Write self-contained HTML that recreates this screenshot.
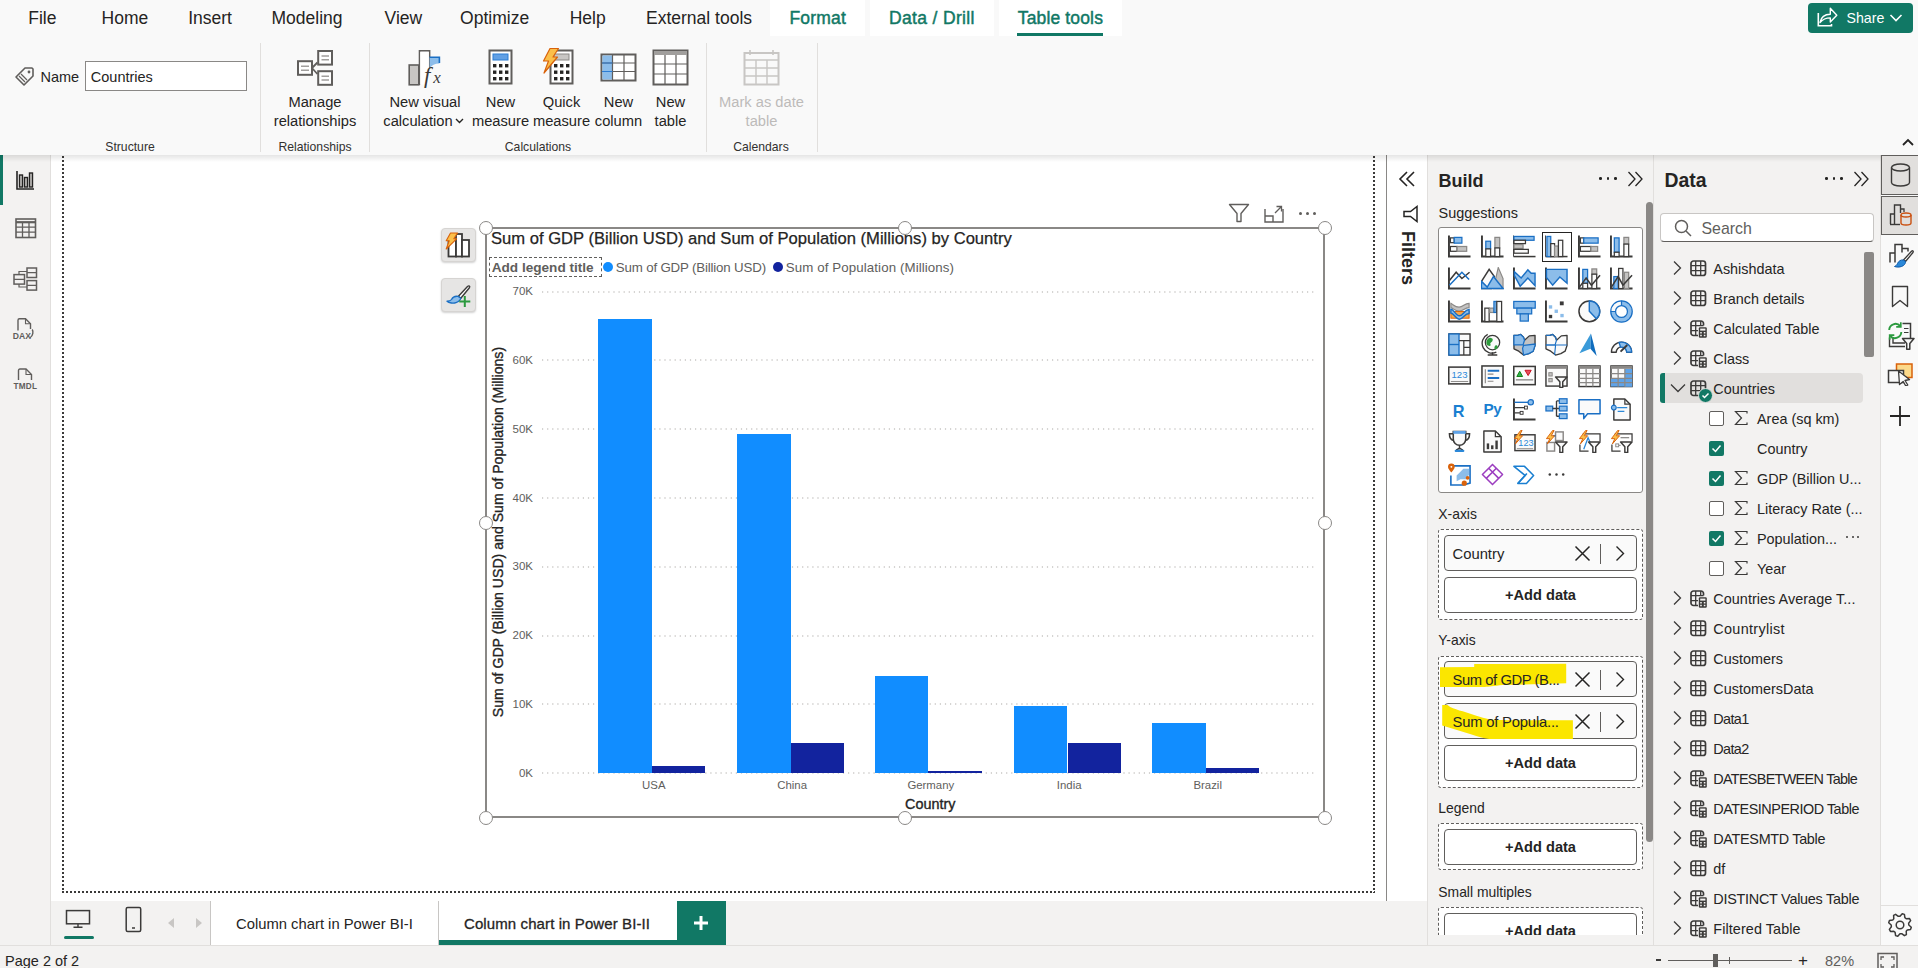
<!DOCTYPE html><html><head><meta charset="utf-8"><style>
html,body{margin:0;padding:0;width:1918px;height:968px;overflow:hidden;background:#fff;font-family:"Liberation Sans",sans-serif;}
.r{position:absolute;}
.t{position:absolute;white-space:nowrap;}
</style></head><body>
<div class="r" style="left:0px;top:0px;width:1918px;height:155px;background:#f9f9f9;"></div>
<div class="r" style="left:770px;top:0px;width:95px;height:36px;background:#ffffff;"></div>
<div class="r" style="left:870px;top:0px;width:124px;height:36px;background:#ffffff;"></div>
<div class="r" style="left:999px;top:0px;width:123px;height:36px;background:#ffffff;"></div>
<div class="r" style="left:0px;top:155px;width:50px;height:790px;background:#f3f2f1;"></div>
<div class="r" style="left:50px;top:155px;width:1px;height:790px;background:#e1dfdd;"></div>
<div class="r" style="left:0px;top:155px;width:3px;height:50px;background:#117865;"></div>
<div class="r" style="left:51px;top:156px;width:1335px;height:745px;background:#ffffff;"></div>
<svg class="r" style="left:62px;top:156px;" width="2" height="737" viewBox="0 0 2 737" fill="none"><line x1="1" y1="0" x2="1" y2="737" stroke="#3b3a39" stroke-width="2" stroke-dasharray="2 2"/></svg>
<svg class="r" style="left:1373px;top:156px;" width="2" height="737" viewBox="0 0 2 737" fill="none"><line x1="1" y1="0" x2="1" y2="737" stroke="#3b3a39" stroke-width="2" stroke-dasharray="2 2"/></svg>
<svg class="r" style="left:62px;top:891px;" width="1313" height="2" viewBox="0 0 1313 2" fill="none"><line x1="0" y1="1" x2="1313" y2="1" stroke="#3b3a39" stroke-width="2" stroke-dasharray="2 2"/></svg>
<div class="r" style="left:1386px;top:155px;width:1px;height:746px;background:#8a8886;"></div>
<div class="r" style="left:1387px;top:155px;width:41px;height:746px;background:#ffffff;"></div>
<div class="r" style="left:51px;top:901px;width:1376px;height:44px;background:#f3f2f1;"></div>
<div class="r" style="left:1427px;top:155px;width:1px;height:790px;background:#e1dfdd;"></div>
<div class="r" style="left:1428px;top:155px;width:225px;height:790px;background:#f3f2f1;"></div>
<div class="r" style="left:1653px;top:155px;width:1px;height:790px;background:#e1dfdd;"></div>
<div class="r" style="left:1654px;top:155px;width:226px;height:790px;background:#f3f2f1;"></div>
<div class="r" style="left:1880px;top:155px;width:1px;height:790px;background:#e1dfdd;"></div>
<div class="r" style="left:1881px;top:155px;width:37px;height:790px;background:#f9f9f9;"></div>
<div class="r" style="left:0px;top:945px;width:1918px;height:23px;background:#f3f2f1;"></div>
<div class="r" style="left:0px;top:945px;width:1918px;height:1px;background:#e1dfdd;"></div>
<div class="r" style="left:0px;top:155px;width:1918px;height:7px;background:linear-gradient(rgba(0,0,0,0.10),rgba(0,0,0,0.0));"></div>
<div class="t" style="left:28.3px;top:9.7px;font-size:17.5px;line-height:17.5px;color:#252423;">File</div>
<div class="t" style="left:101.6px;top:9.7px;font-size:17.5px;line-height:17.5px;color:#252423;">Home</div>
<div class="t" style="left:188.2px;top:9.7px;font-size:17.5px;line-height:17.5px;color:#252423;">Insert</div>
<div class="t" style="left:271.5px;top:9.7px;font-size:17.5px;line-height:17.5px;color:#252423;">Modeling</div>
<div class="t" style="left:384.6px;top:9.7px;font-size:17.5px;line-height:17.5px;color:#252423;">View</div>
<div class="t" style="left:460.1px;top:9.7px;font-size:17.5px;line-height:17.5px;color:#252423;">Optimize</div>
<div class="t" style="left:569.7px;top:9.7px;font-size:17.5px;line-height:17.5px;color:#252423;">Help</div>
<div class="t" style="left:646.0px;top:9.7px;font-size:17.5px;line-height:17.5px;color:#252423;">External tools</div>
<div class="t" style="left:789.5px;top:9.7px;font-size:17.5px;line-height:17.5px;color:#117865;letter-spacing:0.175px;-webkit-text-stroke:0.45px #117865;">Format</div>
<div class="t" style="left:888.9px;top:9.7px;font-size:17.5px;line-height:17.5px;color:#117865;letter-spacing:0.356px;-webkit-text-stroke:0.45px #117865;">Data / Drill</div>
<div class="t" style="left:1017.8px;top:9.7px;font-size:17.5px;line-height:17.5px;color:#117865;letter-spacing:0.143px;-webkit-text-stroke:0.45px #117865;">Table tools</div>
<div class="r" style="left:1017px;top:33px;width:86px;height:3px;background:#117865;"></div>
<div class="r" style="left:1808px;top:3px;width:105px;height:30px;background:#117865;border-radius:4px;"></div>
<div class="t" style="left:1846.5px;top:11.0px;font-size:14.2px;line-height:14.2px;color:#ffffff;">Share</div>
<svg class="r" style="left:1816px;top:5px;" width="23" height="23" viewBox="0 0 23 23" fill="none"><path d="M2.3 8V20.8H15.5V19" stroke="#fff" stroke-width="1.6"/><path d="M4 17.5C5.2 11.5 9 9.3 14.3 9.3V3.2L20.8 10.2L14.3 17V12.9C9.8 12.9 6.8 14.3 4 17.5Z" stroke="#fff" stroke-width="1.4" stroke-linejoin="round"/></svg>
<svg class="r" style="left:1889px;top:13px;" width="14" height="10" viewBox="0 0 14 10" fill="none"><path d="M1.5 2l5.5 5.5 5.5-5.5" stroke="#fff" stroke-width="1.6"/></svg>
<svg class="r" style="left:1902px;top:138px;" width="12" height="8" viewBox="0 0 12 8" fill="none"><path d="M1 7l5-5 5 5" stroke="#252423" stroke-width="1.8"/></svg>
<div class="r" style="left:260px;top:43px;width:1px;height:109px;background:#e1dfdd;"></div>
<div class="r" style="left:369px;top:43px;width:1px;height:109px;background:#e1dfdd;"></div>
<div class="r" style="left:706px;top:43px;width:1px;height:109px;background:#e1dfdd;"></div>
<div class="r" style="left:817px;top:43px;width:1px;height:109px;background:#e1dfdd;"></div>
<svg class="r" style="left:14px;top:65px;" width="22" height="22" viewBox="0 0 22 22" fill="none"><path d="M2 12L11 3h7l1 1v7l-9 9z" stroke="#605e5c" stroke-width="1.6" stroke-linejoin="round"/><path d="M5 11l6 6M7 9l6 6" stroke="#605e5c" stroke-width="1.2"/><circle cx="15" cy="7" r="1.4" fill="#605e5c"/></svg>
<div class="t" style="left:40.5px;top:69.7px;font-size:14.5px;line-height:14.5px;color:#252423;">Name</div>
<div class="r" style="left:85px;top:61px;width:162px;height:30px;background:#fff;border:1px solid #8a8886;box-sizing:border-box;"></div>
<div class="t" style="left:90.8px;top:70.2px;font-size:14.5px;line-height:14.5px;color:#252423;">Countries</div>
<div class="t" style="left:130.0px;top:141.1px;font-size:12.2px;line-height:12.2px;color:#323130;transform:translateX(-50%);">Structure</div>
<svg class="r" style="left:296px;top:49px;" width="38" height="38" viewBox="0 0 38 38" fill="none"><rect x="2" y="12.2" width="14" height="13.6" fill="#fff" stroke="#605e5c" stroke-width="2"/><rect x="22.2" y="2" width="13.8" height="13.6" fill="#fff" stroke="#605e5c" stroke-width="2"/><rect x="22.2" y="22.2" width="13.8" height="13.6" fill="#fff" stroke="#605e5c" stroke-width="2"/><path d="M16 19L21.4 13.5M16 19L21.4 25" stroke="#605e5c" stroke-width="1.8"/><path d="M5 17.3h8M5 21.3h8M25.5 7h7.5M25.5 10.8h7.5M25.5 27.2h7.5M25.5 31h7.5" stroke="#a19f9d" stroke-width="1.4"/></svg>
<div class="t" style="left:315.0px;top:94.6px;font-size:14.7px;line-height:14.7px;color:#252423;transform:translateX(-50%);">Manage</div>
<div class="t" style="left:315.0px;top:114.1px;font-size:14.7px;line-height:14.7px;color:#252423;transform:translateX(-50%);">relationships</div>
<div class="t" style="left:315.0px;top:141.1px;font-size:12.2px;line-height:12.2px;color:#323130;transform:translateX(-50%);">Relationships</div>
<svg class="r" style="left:407px;top:49px;" width="38" height="40" viewBox="0 0 38 40" fill="none"><rect x="2.2" y="16" width="9.6" height="19.8" fill="#c8c6c4" stroke="#605e5c" stroke-width="1.6"/><path d="M12.5 36V1.9H22.6V19.5" fill="#fff" stroke="#605e5c" stroke-width="1.6"/><rect x="13.3" y="2.7" width="8.5" height="33" fill="#fff"/><path d="M22.6 8.3H32.4V14.5C28 14.5 24.5 16 22.6 19.5Z" fill="#8cbdea"/><path d="M22.6 8.3H32.4V14" stroke="#1a6fc4" stroke-width="1.6"/><text x="17" y="34.2" font-family="Liberation Serif" font-style="italic" font-size="23" fill="#3b3a39">f</text><text x="26.2" y="33.5" font-family="Liberation Serif" font-style="italic" font-size="17" fill="#3b3a39">x</text></svg>
<div class="t" style="left:425.0px;top:94.6px;font-size:14.7px;line-height:14.7px;color:#252423;transform:translateX(-50%);">New visual</div>
<div class="t" style="left:418.0px;top:114.1px;font-size:14.7px;line-height:14.7px;color:#252423;transform:translateX(-50%);">calculation</div>
<svg class="r" style="left:455px;top:118px;" width="9" height="6" viewBox="0 0 9 6" fill="none"><path d="M1 1l3.5 3.5L8 1" stroke="#252423" stroke-width="1.4"/></svg>
<svg class="r" style="left:488px;top:49px;" width="26" height="37" viewBox="0 0 26 37" fill="none"><rect x="1.5" y="1.5" width="22" height="33" fill="#fff" stroke="#605e5c" stroke-width="2"/><rect x="5" y="5" width="15" height="6" fill="#62a0e4" stroke="#2b7cd3" stroke-width="1"/><rect x="5" y="15.0" width="3.4" height="3.4" fill="#252423"/><rect x="11" y="15.0" width="3.4" height="3.4" fill="#252423"/><rect x="17" y="15.0" width="3.4" height="3.4" fill="#252423"/><rect x="5" y="21.5" width="3.4" height="3.4" fill="#252423"/><rect x="11" y="21.5" width="3.4" height="3.4" fill="#252423"/><rect x="17" y="21.5" width="3.4" height="3.4" fill="#252423"/><rect x="5" y="28.0" width="3.4" height="3.4" fill="#252423"/><rect x="11" y="28.0" width="3.4" height="3.4" fill="#252423"/><rect x="17" y="28.0" width="3.4" height="3.4" fill="#252423"/></svg>
<div class="t" style="left:500.5px;top:94.6px;font-size:14.7px;line-height:14.7px;color:#252423;transform:translateX(-50%);">New</div>
<div class="t" style="left:500.5px;top:114.1px;font-size:14.7px;line-height:14.7px;color:#252423;transform:translateX(-50%);">measure</div>
<svg class="r" style="left:546px;top:49px;" width="28" height="37" viewBox="0 0 28 37" fill="none"><g transform="translate(3,0)"><rect x="1.5" y="1.5" width="22" height="33" fill="#fff" stroke="#605e5c" stroke-width="2"/><rect x="5" y="5" width="15" height="6" fill="#c8c6c4" stroke="#8a8886" stroke-width="1"/><rect x="5" y="15.0" width="3.4" height="3.4" fill="#252423"/><rect x="11" y="15.0" width="3.4" height="3.4" fill="#252423"/><rect x="17" y="15.0" width="3.4" height="3.4" fill="#252423"/><rect x="5" y="21.5" width="3.4" height="3.4" fill="#252423"/><rect x="11" y="21.5" width="3.4" height="3.4" fill="#252423"/><rect x="17" y="21.5" width="3.4" height="3.4" fill="#252423"/><rect x="5" y="28.0" width="3.4" height="3.4" fill="#252423"/><rect x="11" y="28.0" width="3.4" height="3.4" fill="#252423"/><rect x="17" y="28.0" width="3.4" height="3.4" fill="#252423"/></g></svg>
<svg class="r" style="left:541px;top:47px;" width="19" height="28" viewBox="0 0 19 28" fill="none"><path d="M9 1.5H17.5L12 10H16.5L3 26L7.5 14H2.5Z" fill="#fbbf4a" stroke="#d9620b" stroke-width="1.2" stroke-linejoin="round"/></svg>
<div class="t" style="left:561.5px;top:94.6px;font-size:14.7px;line-height:14.7px;color:#252423;transform:translateX(-50%);">Quick</div>
<div class="t" style="left:561.5px;top:114.1px;font-size:14.7px;line-height:14.7px;color:#252423;transform:translateX(-50%);">measure</div>
<svg class="r" style="left:600px;top:53px;" width="37" height="29" viewBox="0 0 37 29" fill="none"><rect x="1.5" y="1.5" width="34" height="26" fill="#fff" stroke="#605e5c" stroke-width="2"/><rect x="2.5" y="2.5" width="10" height="24" fill="#8cbdea"/><path d="M12.5 2v25M24 2v25M2 10h33M2 18.5h33" stroke="#605e5c" stroke-width="1.2"/><path d="M2 10h10.5M2 18.5h10.5" stroke="#2b7cd3" stroke-width="1.2"/></svg>
<div class="t" style="left:618.5px;top:94.6px;font-size:14.7px;line-height:14.7px;color:#252423;transform:translateX(-50%);">New</div>
<div class="t" style="left:618.5px;top:114.1px;font-size:14.7px;line-height:14.7px;color:#252423;transform:translateX(-50%);">column</div>
<svg class="r" style="left:652px;top:49px;" width="37" height="37" viewBox="0 0 37 37" fill="none"><rect x="1.5" y="1.5" width="34" height="34" fill="#fff" stroke="#605e5c" stroke-width="2"/><rect x="2" y="2" width="33" height="4" fill="#a19f9d"/><path d="M13 6v29M24 6v29M2 15h33M2 25h33" stroke="#605e5c" stroke-width="1.2"/></svg>
<div class="t" style="left:670.5px;top:94.6px;font-size:14.7px;line-height:14.7px;color:#252423;transform:translateX(-50%);">New</div>
<div class="t" style="left:670.5px;top:114.1px;font-size:14.7px;line-height:14.7px;color:#252423;transform:translateX(-50%);">table</div>
<div class="t" style="left:538.0px;top:141.1px;font-size:12.2px;line-height:12.2px;color:#323130;transform:translateX(-50%);">Calculations</div>
<svg class="r" style="left:743px;top:49px;" width="37" height="37" viewBox="0 0 37 37" fill="none"><rect x="1.5" y="4" width="34" height="31.5" fill="none" stroke="#c8c6c4" stroke-width="2"/><path d="M7 1v5M30 1v5" stroke="#c8c6c4" stroke-width="1.6"/><path d="M1.5 11h34M13 11v24M24 11v24M2 19h33M2 27h33" stroke="#c8c6c4" stroke-width="1.4"/></svg>
<div class="t" style="left:761.5px;top:94.6px;font-size:14.7px;line-height:14.7px;color:#bdbbb9;transform:translateX(-50%);">Mark as date</div>
<div class="t" style="left:761.5px;top:114.1px;font-size:14.7px;line-height:14.7px;color:#bdbbb9;transform:translateX(-50%);">table</div>
<div class="t" style="left:761.0px;top:141.1px;font-size:12.2px;line-height:12.2px;color:#323130;transform:translateX(-50%);">Calendars</div>
<svg class="r" style="left:16px;top:170px;" width="19" height="20" viewBox="0 0 19 20" fill="none"><path d="M1 1v18h17" stroke="#252423" stroke-width="1.6"/><rect x="3.5" y="5" width="3" height="12" fill="#c8c6c4" stroke="#252423" stroke-width="1.4"/><rect x="8.5" y="7.5" width="3" height="9.5" fill="#c8c6c4" stroke="#252423" stroke-width="1.4"/><rect x="13.5" y="3" width="3" height="14" fill="#c8c6c4" stroke="#252423" stroke-width="1.4"/></svg>
<svg class="r" style="left:15px;top:218px;" width="22" height="21" viewBox="0 0 22 21" fill="none"><rect x="1" y="1" width="19.5" height="18.5" stroke="#605e5c" stroke-width="1.6"/><path d="M1 4.2H20.5" stroke="#605e5c" stroke-width="2.2"/><path d="M1 9.2H20.5M1 14.2H20.5M7.5 4V19.5M14 4V19.5" stroke="#605e5c" stroke-width="1.3"/></svg>
<svg class="r" style="left:13px;top:267px;" width="25" height="24" viewBox="0 0 25 24" fill="none"><rect x="1" y="7.6" width="10.5" height="9.5" stroke="#605e5c" stroke-width="1.5"/><rect x="14" y="1" width="9.5" height="9.5" stroke="#605e5c" stroke-width="1.5"/><rect x="14" y="13.6" width="9.5" height="9.5" stroke="#605e5c" stroke-width="1.5"/><path d="M1 12.4H11.5M14 5.7H23.5M14 18.4H23.5" stroke="#605e5c" stroke-width="1.2"/><path d="M6 7.6V4.5H14M6 17.1V20H14" stroke="#605e5c" stroke-width="1.2"/></svg>
<svg class="r" style="left:11px;top:317px;" width="26" height="24" viewBox="0 0 26 24" fill="none"><path d="M7 13.5V3.2C7 2.4 7.6 1.8 8.4 1.8H14.5L19.5 6.8V12" stroke="#605e5c" stroke-width="1.4"/><path d="M14.5 1.8V6.8H19.5" stroke="#605e5c" stroke-width="1.1"/><path d="M21.2 12.5C22.5 14.5 22.2 18.5 19 20.8" stroke="#605e5c" stroke-width="1.4"/><text x="1.8" y="21.8" font-family="Liberation Sans" font-size="8.6" font-weight="700" fill="#605e5c">DAX</text></svg>
<svg class="r" style="left:12px;top:367px;" width="27" height="24" viewBox="0 0 27 24" fill="none"><path d="M6.5 13V3.5C6.5 2.7 7.1 2 7.9 2H14L19.5 7.5V13" stroke="#605e5c" stroke-width="1.4"/><path d="M14 2V7.5H19.5" stroke="#605e5c" stroke-width="1.1"/><text x="1.6" y="22.4" font-family="Liberation Sans" font-size="8.2" font-weight="700" fill="#605e5c" letter-spacing="0.2">TMDL</text></svg>
<svg class="r" style="left:1228px;top:203px;" width="22" height="20" viewBox="0 0 22 20" fill="none"><path d="M1.5 1.5h19l-7.5 9v8h-4v-8z" stroke="#605e5c" stroke-width="1.4" stroke-linejoin="round"/></svg>
<svg class="r" style="left:1264px;top:204px;" width="20" height="19" viewBox="0 0 20 19" fill="none"><path d="M1 5v13h18V5" stroke="#605e5c" stroke-width="1.4"/><path d="M1 12h8v6" stroke="#605e5c" stroke-width="1.4"/><path d="M11 9l6-6M12.5 2.5h5v5" stroke="#605e5c" stroke-width="1.3"/></svg>
<div class="r" style="left:1299px;top:212px;width:3px;height:3px;background:#605e5c;border-radius:50%;"></div>
<div class="r" style="left:1306px;top:212px;width:3px;height:3px;background:#605e5c;border-radius:50%;"></div>
<div class="r" style="left:1313px;top:212px;width:3px;height:3px;background:#605e5c;border-radius:50%;"></div>
<div class="r" style="left:441px;top:228px;width:35px;height:34px;background:#e6e5e4;border:1px solid #d6d4d2;border-radius:4px;box-sizing:border-box;box-shadow:0 1px 2px rgba(0,0,0,0.18);"></div>
<div class="r" style="left:441px;top:278px;width:35px;height:34px;background:#e6e5e4;border:1px solid #d6d4d2;border-radius:4px;box-sizing:border-box;box-shadow:0 1px 2px rgba(0,0,0,0.18);"></div>
<svg class="r" style="left:441px;top:228px;" width="35" height="34" viewBox="0 0 35 34" fill="none"><rect x="7.5" y="12" width="7.5" height="16.5" fill="#fff" stroke="#3b3a39" stroke-width="1.8"/><rect x="15" y="6" width="6" height="22.5" fill="#fff" stroke="#3b3a39" stroke-width="1.8"/><rect x="21" y="12" width="7" height="16.5" fill="#fff" stroke="#3b3a39" stroke-width="1.8"/><path d="M9.5 5H16.5L12.8 10.8H15.6L5.2 21L8.2 12.8H5.2Z" fill="#fbbf4a" stroke="#d9620b" stroke-width="1.1" stroke-linejoin="round"/></svg>
<svg class="r" style="left:441px;top:278px;" width="35" height="34" viewBox="0 0 35 34" fill="none"><path d="M26.5 8.5C28 7.2 29.3 8.3 28.4 9.8L19.8 20.2L17.2 18.4Z" fill="#fff" stroke="#3b3a39" stroke-width="1.4" stroke-linejoin="round"/><path d="M17.2 18.4C14 17.8 11.5 19.5 10.5 21.5C9.5 23 7.8 23.2 6 23.2C8 25.2 12.5 25.5 15 24.6C18 23.6 19.5 21.8 19.8 20.2Z" fill="#8cbdea" stroke="#1a6fc4" stroke-width="1.3" stroke-linejoin="round"/><path d="M23.8 18V29M18.3 23.5H29.3" stroke="#2c9a3f" stroke-width="2"/></svg>
<div class="r" style="left:485px;top:227px;width:840px;height:591px;border:2px solid #8a8886;box-sizing:border-box;"></div>
<div class="r" style="left:487px;top:229px;width:836px;height:587px;background:#fff;"></div>
<div class="t" style="left:491.0px;top:230.5px;font-size:16.6px;line-height:16.6px;color:#252423;-webkit-text-stroke:0.25px #252423;">Sum of GDP (Billion USD) and Sum of Population (Millions) by Country</div>
<div class="r" style="left:489px;top:257px;width:113px;height:20px;border:1.5px dashed #605e5c;box-sizing:border-box;"></div>
<div class="t" style="left:491.7px;top:260.9px;font-size:13.6px;line-height:13.6px;color:#605e5c;font-weight:700;">Add legend title</div>
<div class="r" style="left:602.5px;top:262.4px;width:10px;height:10px;background:#118dff;border-radius:50%;"></div>
<div class="t" style="left:615.8px;top:261.3px;font-size:13.3px;line-height:13.3px;color:#605e5c;letter-spacing:-0.17px;">Sum of GDP (Billion USD)</div>
<div class="r" style="left:772.6px;top:262.4px;width:10px;height:10px;background:#12239e;border-radius:50%;"></div>
<div class="t" style="left:785.8px;top:261.3px;font-size:13.3px;line-height:13.3px;color:#605e5c;letter-spacing:0.1px;">Sum of Population (Millions)</div>
<svg class="r" style="left:542px;top:772px;" width="774" height="2" viewBox="0 0 774 2" fill="none"><line x1="0" y1="1" x2="774" y2="1" stroke="#c8c6c4" stroke-width="1.3" stroke-dasharray="1.2 3.9"/></svg>
<div class="t" style="left:533.0px;top:767.8px;font-size:11.5px;line-height:11.5px;color:#605e5c;transform:translateX(-100%);">0K</div>
<svg class="r" style="left:542px;top:703px;" width="774" height="2" viewBox="0 0 774 2" fill="none"><line x1="0" y1="1" x2="774" y2="1" stroke="#c8c6c4" stroke-width="1.3" stroke-dasharray="1.2 3.9"/></svg>
<div class="t" style="left:533.0px;top:699.0px;font-size:11.5px;line-height:11.5px;color:#605e5c;transform:translateX(-100%);">10K</div>
<svg class="r" style="left:542px;top:635px;" width="774" height="2" viewBox="0 0 774 2" fill="none"><line x1="0" y1="1" x2="774" y2="1" stroke="#c8c6c4" stroke-width="1.3" stroke-dasharray="1.2 3.9"/></svg>
<div class="t" style="left:533.0px;top:630.2px;font-size:11.5px;line-height:11.5px;color:#605e5c;transform:translateX(-100%);">20K</div>
<svg class="r" style="left:542px;top:566px;" width="774" height="2" viewBox="0 0 774 2" fill="none"><line x1="0" y1="1" x2="774" y2="1" stroke="#c8c6c4" stroke-width="1.3" stroke-dasharray="1.2 3.9"/></svg>
<div class="t" style="left:533.0px;top:561.4px;font-size:11.5px;line-height:11.5px;color:#605e5c;transform:translateX(-100%);">30K</div>
<svg class="r" style="left:542px;top:497px;" width="774" height="2" viewBox="0 0 774 2" fill="none"><line x1="0" y1="1" x2="774" y2="1" stroke="#c8c6c4" stroke-width="1.3" stroke-dasharray="1.2 3.9"/></svg>
<div class="t" style="left:533.0px;top:492.6px;font-size:11.5px;line-height:11.5px;color:#605e5c;transform:translateX(-100%);">40K</div>
<svg class="r" style="left:542px;top:428px;" width="774" height="2" viewBox="0 0 774 2" fill="none"><line x1="0" y1="1" x2="774" y2="1" stroke="#c8c6c4" stroke-width="1.3" stroke-dasharray="1.2 3.9"/></svg>
<div class="t" style="left:533.0px;top:423.8px;font-size:11.5px;line-height:11.5px;color:#605e5c;transform:translateX(-100%);">50K</div>
<svg class="r" style="left:542px;top:359px;" width="774" height="2" viewBox="0 0 774 2" fill="none"><line x1="0" y1="1" x2="774" y2="1" stroke="#c8c6c4" stroke-width="1.3" stroke-dasharray="1.2 3.9"/></svg>
<div class="t" style="left:533.0px;top:355.0px;font-size:11.5px;line-height:11.5px;color:#605e5c;transform:translateX(-100%);">60K</div>
<svg class="r" style="left:542px;top:291px;" width="774" height="2" viewBox="0 0 774 2" fill="none"><line x1="0" y1="1" x2="774" y2="1" stroke="#c8c6c4" stroke-width="1.3" stroke-dasharray="1.2 3.9"/></svg>
<div class="t" style="left:533.0px;top:286.2px;font-size:11.5px;line-height:11.5px;color:#605e5c;transform:translateX(-100%);">70K</div>
<div class="r" style="left:598.2px;top:319.0px;width:53.6px;height:454.3px;background:#118dff;"></div>
<div class="r" style="left:651.8px;top:766.0px;width:53.6px;height:7.3px;background:#12239e;"></div>
<div class="t" style="left:653.8px;top:779.7px;font-size:11.4px;line-height:11.4px;color:#605e5c;transform:translateX(-50%);">USA</div>
<div class="r" style="left:737.2px;top:434.0px;width:53.6px;height:339.3px;background:#118dff;"></div>
<div class="r" style="left:790.8px;top:743.0px;width:53.6px;height:30.3px;background:#12239e;"></div>
<div class="t" style="left:792.1px;top:779.7px;font-size:11.4px;line-height:11.4px;color:#605e5c;transform:translateX(-50%);">China</div>
<div class="r" style="left:874.8px;top:676.1px;width:53.6px;height:97.2px;background:#118dff;"></div>
<div class="r" style="left:928.4px;top:770.7px;width:53.6px;height:2.6px;background:#12239e;"></div>
<div class="t" style="left:930.8px;top:779.7px;font-size:11.4px;line-height:11.4px;color:#605e5c;transform:translateX(-50%);">Germany</div>
<div class="r" style="left:1013.9px;top:706.4px;width:53.6px;height:66.9px;background:#118dff;"></div>
<div class="r" style="left:1067.5px;top:743.1px;width:53.6px;height:30.2px;background:#12239e;"></div>
<div class="t" style="left:1069.2px;top:779.7px;font-size:11.4px;line-height:11.4px;color:#605e5c;transform:translateX(-50%);">India</div>
<div class="r" style="left:1152.1px;top:722.8px;width:53.6px;height:50.5px;background:#118dff;"></div>
<div class="r" style="left:1205.7px;top:768.1px;width:53.6px;height:5.2px;background:#12239e;"></div>
<div class="t" style="left:1207.7px;top:779.7px;font-size:11.4px;line-height:11.4px;color:#605e5c;transform:translateX(-50%);">Brazil</div>
<div class="t" style="left:930.3px;top:796.7px;font-size:14.4px;line-height:14.4px;color:#252423;transform:translateX(-50%);-webkit-text-stroke:0.35px #252423;">Country</div>
<div class="t" style="left:498.2px;top:532.2px;font-size:14.1px;line-height:14.1px;color:#252423;-webkit-text-stroke:0.35px #252423;transform:translate(-50%,-50%) rotate(-90deg);">Sum of GDP (Billion USD) and Sum of Population (Millions)</div>
<div class="r" style="left:478.5px;top:220.5px;width:14px;height:14px;background:#fff;border:1.5px solid #8a8886;border-radius:50%;box-sizing:border-box;"></div>
<div class="r" style="left:478.5px;top:515.5px;width:14px;height:14px;background:#fff;border:1.5px solid #8a8886;border-radius:50%;box-sizing:border-box;"></div>
<div class="r" style="left:478.5px;top:810.5px;width:14px;height:14px;background:#fff;border:1.5px solid #8a8886;border-radius:50%;box-sizing:border-box;"></div>
<div class="r" style="left:898.0px;top:220.5px;width:14px;height:14px;background:#fff;border:1.5px solid #8a8886;border-radius:50%;box-sizing:border-box;"></div>
<div class="r" style="left:898.0px;top:810.5px;width:14px;height:14px;background:#fff;border:1.5px solid #8a8886;border-radius:50%;box-sizing:border-box;"></div>
<div class="r" style="left:1317.5px;top:220.5px;width:14px;height:14px;background:#fff;border:1.5px solid #8a8886;border-radius:50%;box-sizing:border-box;"></div>
<div class="r" style="left:1317.5px;top:515.5px;width:14px;height:14px;background:#fff;border:1.5px solid #8a8886;border-radius:50%;box-sizing:border-box;"></div>
<div class="r" style="left:1317.5px;top:810.5px;width:14px;height:14px;background:#fff;border:1.5px solid #8a8886;border-radius:50%;box-sizing:border-box;"></div>
<svg class="r" style="left:1398px;top:171px;" width="18" height="16" viewBox="0 0 18 16" fill="none"><path d="M9 1L2 8l7 7M16 1L9 8l7 7" stroke="#252423" stroke-width="1.6"/></svg>
<svg class="r" style="left:1402px;top:205px;" width="17" height="18" viewBox="0 0 17 18" fill="none"><path d="M15 1.5v15L8.5 11.5H2V6.5h6.5z" stroke="#252423" stroke-width="1.5" stroke-linejoin="miter"/></svg>
<div class="t" style="left:1407.6px;top:257.5px;font-size:18px;line-height:18px;color:#252423;font-weight:700;transform:translate(-50%,-50%) rotate(90deg);">Filters</div>
<svg class="r" style="left:65px;top:909px;" width="26" height="20" viewBox="0 0 26 20" fill="none"><rect x="1.5" y="1.6" width="23" height="13.2" stroke="#3b3a39" stroke-width="1.5"/><path d="M13 15v2.8M8.5 18.3h9" stroke="#3b3a39" stroke-width="1.4"/></svg>
<div class="r" style="left:64px;top:936px;width:30px;height:3px;background:#117865;border-radius:2px;"></div>
<svg class="r" style="left:124px;top:906px;" width="18" height="27" viewBox="0 0 18 27" fill="none"><rect x="2.2" y="1.5" width="14.5" height="24" rx="1.5" stroke="#3b3a39" stroke-width="1.5"/><path d="M8 22h3" stroke="#3b3a39" stroke-width="1.5"/></svg>
<svg class="r" style="left:166px;top:916.5px;" width="10" height="12" viewBox="0 0 10 12" fill="none"><path d="M8 1L2 6l6 5z" fill="#c8c6c4"/></svg>
<svg class="r" style="left:194px;top:916.5px;" width="10" height="12" viewBox="0 0 10 12" fill="none"><path d="M2 1l6 5-6 5z" fill="#c8c6c4"/></svg>
<div class="r" style="left:210px;top:901px;width:1px;height:44px;background:#c8c6c4;"></div>
<div class="r" style="left:211px;top:901px;width:227px;height:44px;background:#fff;"></div>
<div class="t" style="left:236.0px;top:916.5px;font-size:14.8px;line-height:14.8px;color:#252423;">Column chart in Power BI-I</div>
<div class="r" style="left:438px;top:901px;width:1px;height:44px;background:#c8c6c4;"></div>
<div class="r" style="left:439px;top:901px;width:238px;height:44px;background:#fff;"></div>
<div class="r" style="left:439px;top:940px;width:238px;height:5px;background:#117865;"></div>
<div class="t" style="left:464.0px;top:916.3px;font-size:15px;line-height:15px;color:#252423;letter-spacing:0.1px;-webkit-text-stroke:0.3px #252423;">Column chart in Power BI-II</div>
<div class="r" style="left:677px;top:901px;width:49px;height:44px;background:#117865;"></div>
<svg class="r" style="left:692px;top:914px;" width="18" height="18" viewBox="0 0 18 18" fill="none"><path d="M9 2v14M2 9h14" stroke="#fff" stroke-width="3"/></svg>
<div class="t" style="left:5.0px;top:953.7px;font-size:14.5px;line-height:14.5px;color:#252423;">Page 2 of 2</div>
<div class="r" style="left:1656px;top:959px;width:5px;height:2px;background:#3b3a39;"></div>
<div class="r" style="left:1668px;top:960px;width:124px;height:1px;background:#605e5c;"></div>
<div class="r" style="left:1713px;top:954px;width:5px;height:13px;background:#605e5c;"></div>
<div class="r" style="left:1729px;top:957px;width:1px;height:7px;background:#605e5c;"></div>
<div class="t" style="left:1803.0px;top:951.6px;font-size:17px;line-height:17px;color:#252423;transform:translateX(-50%);">+</div>
<div class="t" style="left:1825.0px;top:953.7px;font-size:14.5px;line-height:14.5px;color:#605e5c;">82%</div>
<svg class="r" style="left:1877px;top:952px;" width="21" height="17" viewBox="0 0 21 17" fill="none"><rect x="1" y="1.5" width="19" height="16" stroke="#605e5c" stroke-width="1.5"/><path d="M4 8V5h3M14 5h3v3M17 12v3h-3M7 15H4v-3" stroke="#605e5c" stroke-width="1.3"/></svg>
<div class="t" style="left:1438.6px;top:171.7px;font-size:18px;line-height:18px;color:#252423;font-weight:700;">Build</div>
<div class="r" style="left:1599px;top:177px;width:2.6px;height:2.6px;background:#252423;border-radius:50%;"></div>
<div class="r" style="left:1606.5px;top:177px;width:2.6px;height:2.6px;background:#252423;border-radius:50%;"></div>
<div class="r" style="left:1614px;top:177px;width:2.6px;height:2.6px;background:#252423;border-radius:50%;"></div>
<svg class="r" style="left:1627px;top:171px;" width="17" height="16" viewBox="0 0 17 16" fill="none"><path d="M1.5 1l6.5 7-6.5 7M8.5 1l6.5 7-6.5 7" stroke="#252423" stroke-width="1.3"/></svg>
<div class="r" style="left:1646px;top:202px;width:7px;height:640px;background:#8a8886;border-radius:4px;"></div>
<div class="t" style="left:1438.6px;top:205.6px;font-size:14.45px;line-height:14.45px;color:#252423;">Suggestions</div>
<div class="r" style="left:1438px;top:227px;width:205px;height:266px;background:#fff;border:1px solid #8a8886;border-radius:3px;box-sizing:border-box;"></div>
<svg class="r" style="left:1448.1px;top:234.9px;" width="23" height="23" viewBox="0 0 24 24" fill="none"><path d="M1 0.5V22.5H23.5" stroke="#3b3a39" stroke-width="2"/><rect x="2.5" y="3" width="4" height="5" fill="#fafafa" stroke="#3b3a39" stroke-width="1.3"/><rect x="6.5" y="2.5" width="8" height="6" fill="#8cbdea" stroke="#1a6fc4" stroke-width="1.3"/><rect x="2.5" y="12" width="7" height="5" fill="#fafafa" stroke="#3b3a39" stroke-width="1.3"/><rect x="9.5" y="12" width="10" height="5" fill="#c4c3c2" stroke="#8a8886" stroke-width="1.3"/></svg>
<svg class="r" style="left:1480.5px;top:234.9px;" width="23" height="23" viewBox="0 0 24 24" fill="none"><path d="M1 0.5V22.5H23.5" stroke="#3b3a39" stroke-width="2"/><rect x="5" y="6.5" width="5" height="8" fill="#8cbdea" stroke="#1a6fc4" stroke-width="1.3"/><rect x="5" y="14.5" width="5" height="8" fill="#fafafa" stroke="#3b3a39" stroke-width="1.3"/><rect x="14.5" y="2.5" width="5" height="11" fill="#c4c3c2" stroke="#8a8886" stroke-width="1.3"/><rect x="14.5" y="13.5" width="5" height="9" fill="#fafafa" stroke="#3b3a39" stroke-width="1.3"/></svg>
<svg class="r" style="left:1512.9px;top:234.9px;" width="23" height="23" viewBox="0 0 24 24" fill="none"><path d="M0.5 22.5H23.5" stroke="#3b3a39" stroke-width="1.6"/><path d="M0.5 0.5V22.5" stroke="#3b3a39" stroke-width="1"/><rect x="1" y="1.5" width="21" height="4" fill="#8cbdea" stroke="#1a6fc4" stroke-width="1.3"/><rect x="1" y="5.5" width="12" height="3.5" fill="#fafafa" stroke="#3b3a39" stroke-width="1.3"/><rect x="1" y="10" width="9.5" height="4" fill="#c4c3c2" stroke="#8a8886" stroke-width="1.3"/><rect x="1" y="15" width="15" height="4" fill="#fafafa" stroke="#3b3a39" stroke-width="1.3"/></svg>
<svg class="r" style="left:1545.2px;top:234.9px;" width="23" height="23" viewBox="0 0 24 24" fill="none"><path d="M0.5 22.5H23.5" stroke="#3b3a39" stroke-width="1.6"/><path d="M0.5 0.5V22.5" stroke="#3b3a39" stroke-width="1"/><rect x="2" y="1.5" width="4" height="21" fill="#8cbdea" stroke="#1a6fc4" stroke-width="1.3"/><rect x="6" y="9" width="4" height="13.5" fill="#fafafa" stroke="#3b3a39" stroke-width="1.3"/><rect x="10" y="11.5" width="4" height="11" fill="#c4c3c2" stroke="#8a8886" stroke-width="1.3"/><rect x="14" y="5.5" width="4.5" height="17" fill="#fafafa" stroke="#3b3a39" stroke-width="1.3"/></svg>
<svg class="r" style="left:1577.6px;top:234.9px;" width="23" height="23" viewBox="0 0 24 24" fill="none"><path d="M1 0.5V22.5H23.5" stroke="#3b3a39" stroke-width="2"/><rect x="2.5" y="3" width="3.5" height="5.5" fill="#fafafa" stroke="#3b3a39" stroke-width="1.3"/><rect x="6" y="3" width="15" height="5.5" fill="#8cbdea" stroke="#1a6fc4" stroke-width="1.3"/><rect x="2.5" y="12" width="11" height="5" fill="#fafafa" stroke="#3b3a39" stroke-width="1.3"/><rect x="13.5" y="12" width="7" height="5" fill="#c4c3c2" stroke="#8a8886" stroke-width="1.3"/></svg>
<svg class="r" style="left:1610.0px;top:234.9px;" width="23" height="23" viewBox="0 0 24 24" fill="none"><path d="M1 0.5V22.5H23.5" stroke="#3b3a39" stroke-width="2"/><rect x="4.5" y="3" width="5" height="15" fill="#8cbdea" stroke="#1a6fc4" stroke-width="1.3"/><rect x="4.5" y="18" width="5" height="4.5" fill="#fafafa" stroke="#3b3a39" stroke-width="1.3"/><rect x="14.5" y="2.5" width="5" height="7" fill="#c4c3c2" stroke="#8a8886" stroke-width="1.3"/><rect x="14.5" y="9.5" width="5" height="13" fill="#fafafa" stroke="#3b3a39" stroke-width="1.3"/></svg>
<svg class="r" style="left:1448.1px;top:267.4px;" width="23" height="23" viewBox="0 0 24 24" fill="none"><path d="M1 0.5V22.5H23.5" stroke="#3b3a39" stroke-width="2"/><path d="M1.5 14L8.5 5.5L14.5 12L22.5 5.5" stroke="#3b3a39" stroke-width="1.6"/><path d="M1.5 19L14.5 5.5L22 13" stroke="#1a6fc4" stroke-width="1.6"/></svg>
<svg class="r" style="left:1480.5px;top:267.4px;" width="23" height="23" viewBox="0 0 24 24" fill="none"><path d="M13 22.5L18 0.5L23 12V22.5Z" fill="#c4c3c2" stroke="#8a8886" stroke-width="1.2"/><path d="M0.5 15L8.5 2.5L14 10L11 22.5H0.5Z" fill="#fafafa" stroke="#3b3a39" stroke-width="1.6"/><path d="M0.5 15L6.5 21L13 10L23 22.5H0.5Z" fill="#8cbdea" stroke="#1a6fc4" stroke-width="1.5"/></svg>
<svg class="r" style="left:1512.9px;top:267.4px;" width="23" height="23" viewBox="0 0 24 24" fill="none"><path d="M1 0.5V22.5H23.5" stroke="#3b3a39" stroke-width="2"/><path d="M1.5 5L8.5 11.5L15.5 3L19 6.5H23V19.5L15.5 11.5L7.5 20L1.5 9Z" fill="#8cbdea" stroke="#1a6fc4" stroke-width="1.5"/></svg>
<svg class="r" style="left:1545.2px;top:267.4px;" width="23" height="23" viewBox="0 0 24 24" fill="none"><path d="M1 0.5V22.5H23.5" stroke="#3b3a39" stroke-width="2"/><path d="M1.5 2.5H23V17L15.5 10.5L8 19L1.5 11Z" fill="#8cbdea" stroke="#1a6fc4" stroke-width="1.5"/></svg>
<svg class="r" style="left:1577.6px;top:267.4px;" width="23" height="23" viewBox="0 0 24 24" fill="none"><path d="M1 0.5V22.5H23.5" stroke="#3b3a39" stroke-width="2"/><rect x="5" y="2.5" width="5" height="14.5" fill="#8cbdea" stroke="#1a6fc4" stroke-width="1.3"/><rect x="5" y="17" width="5" height="5.5" fill="#fafafa" stroke="#3b3a39" stroke-width="1.3"/><rect x="14.5" y="2" width="5" height="5.5" fill="#c4c3c2" stroke="#8a8886" stroke-width="1.3"/><rect x="14.5" y="7.5" width="5" height="15" fill="#fafafa" stroke="#3b3a39" stroke-width="1.3"/><path d="M1.5 21L8.5 11.5L14 19L23 8.5" stroke="#3b3a39" stroke-width="1.6"/></svg>
<svg class="r" style="left:1610.0px;top:267.4px;" width="23" height="23" viewBox="0 0 24 24" fill="none"><path d="M1 0.5V22.5H23.5" stroke="#3b3a39" stroke-width="2"/><rect x="4" y="10" width="4.5" height="12.5" fill="#8cbdea" stroke="#1a6fc4" stroke-width="1.3"/><rect x="9" y="1.5" width="4.5" height="21" fill="#fafafa" stroke="#3b3a39" stroke-width="1.3"/><rect x="15" y="5.5" width="4.5" height="17" fill="#c4c3c2" stroke="#8a8886" stroke-width="1.3"/><path d="M1.5 21L8.5 10L13.5 19L23 8.5" stroke="#3b3a39" stroke-width="1.6"/></svg>
<svg class="r" style="left:1448.1px;top:300.0px;" width="23" height="23" viewBox="0 0 24 24" fill="none"><path d="M1 0.5V22.5H23.5" stroke="#3b3a39" stroke-width="2"/><path d="M3 3.5C6 5 7 7.5 11.5 7.5S17 3.5 22 3.5V8C17 8 16 11.5 11.5 11.5S6 9 3 8Z" fill="#c4c3c2" stroke="#8a8886" stroke-width="1.2"/><rect x="3" y="12" width="19" height="7" fill="#f7a74a" stroke="#d9620b" stroke-width="1"/><path d="M3 9.5C6 9.5 8 16.5 12 16.5S17 10 22 10V14C17 14 16 20 12 20S6 13.5 3 13.5Z" fill="#8cbdea" stroke="#1a6fc4" stroke-width="1.5"/></svg>
<svg class="r" style="left:1480.5px;top:300.0px;" width="23" height="23" viewBox="0 0 24 24" fill="none"><path d="M1 0.5V22.5H23.5" stroke="#3b3a39" stroke-width="2"/><rect x="4" y="8.5" width="4.5" height="14" fill="#fafafa" stroke="#3b3a39" stroke-width="1.3"/><rect x="9" y="8.5" width="4.5" height="4.5" fill="#c4c3c2" stroke="#8a8886" stroke-width="1.3"/><rect x="13.5" y="1.5" width="2.5" height="11.5" fill="#8cbdea" stroke="#1a6fc4" stroke-width="1.3"/><rect x="16.5" y="1.5" width="5" height="21" fill="#fafafa" stroke="#3b3a39" stroke-width="1.3"/></svg>
<svg class="r" style="left:1512.9px;top:300.0px;" width="23" height="23" viewBox="0 0 24 24" fill="none"><rect x="0.8" y="1.5" width="22.4" height="7" fill="#8cbdea" stroke="#1a6fc4" stroke-width="1.3"/><rect x="4" y="8.5" width="15.5" height="6" fill="#8cbdea" stroke="#1a6fc4" stroke-width="1.3"/><rect x="7.5" y="14.5" width="8.5" height="7.5" fill="#8cbdea" stroke="#1a6fc4" stroke-width="1.3"/></svg>
<svg class="r" style="left:1545.2px;top:300.0px;" width="23" height="23" viewBox="0 0 24 24" fill="none"><path d="M1 0.5V22.5H23.5" stroke="#3b3a39" stroke-width="2"/><rect x="15.5" y="1.5" width="4" height="4" fill="#3b3a39"/><rect x="4" y="5.5" width="3.5" height="3.5" fill="#8cbdea"/><rect x="10" y="10" width="3.5" height="3.5" fill="#8cbdea"/><rect x="16" y="14.5" width="3.5" height="3.5" fill="#8cbdea"/><rect x="4" y="15.5" width="3.5" height="3.5" fill="#3b3a39"/></svg>
<svg class="r" style="left:1577.6px;top:300.0px;" width="23" height="23" viewBox="0 0 24 24" fill="none"><circle cx="11.8" cy="11.8" r="10.8" fill="#fafafa" stroke="#3b3a39" stroke-width="1.6"/><path d="M11.8 1V11.8L19.2 19.6A10.8 10.8 0 0 0 11.8 1Z" fill="#8cbdea" stroke="#1a6fc4" stroke-width="1.5" stroke-linejoin="round"/></svg>
<svg class="r" style="left:1610.0px;top:300.0px;" width="23" height="23" viewBox="0 0 24 24" fill="none"><circle cx="12" cy="12" r="8.7" stroke="#fafafa" stroke-width="5"/><path d="M12 3.3A8.7 8.7 0 1 1 3.3 12" stroke="#8cbdea" stroke-width="5"/><circle cx="12" cy="12" r="11.2" stroke="#1a6fc4" stroke-width="1.3"/><circle cx="12" cy="12" r="6.2" stroke="#1a6fc4" stroke-width="1.3"/><path d="M12 0.8V6M0.8 12H6" stroke="#1a6fc4" stroke-width="1.3"/></svg>
<svg class="r" style="left:1448.1px;top:332.6px;" width="23" height="23" viewBox="0 0 24 24" fill="none"><rect x="1" y="1" width="22" height="22" fill="#fafafa" stroke="#3b3a39" stroke-width="1.5"/><rect x="1" y="1" width="10.5" height="22" fill="#8cbdea" stroke="#1a6fc4" stroke-width="1.4"/><path d="M1 12H11.5" stroke="#1a6fc4" stroke-width="1.4"/><path d="M11.5 8H23M16.5 8V23M16.5 15H23" stroke="#3b3a39" stroke-width="1.3"/></svg>
<svg class="r" style="left:1480.5px;top:332.6px;" width="23" height="23" viewBox="0 0 24 24" fill="none"><path d="M7 1.5A10 10 0 0 0 16 20" stroke="#3b3a39" stroke-width="1.4"/><circle cx="12" cy="10" r="7.5" fill="#fafafa" stroke="#3b3a39" stroke-width="1.3"/><path d="M9 5c2 0 4 1 3 3s-3 2-2 4-3 2-4 0 0-6 3-7zM15 13c2-1 3 1 2 3s-3 1-3 0 0-2 1-3z" fill="#2d9b3c"/><path d="M12 20V23M7 23H17" stroke="#3b3a39" stroke-width="1.6"/></svg>
<svg class="r" style="left:1512.9px;top:332.6px;" width="23" height="23" viewBox="0 0 24 24" fill="none"><path d="M1 2.5L5 2.5L8 1.5L11 4.5L12 7.5L17 3L23 2.5V13L21 19L16.5 21.5L11 23L6 19L1 16.5Z" fill="#c4c3c2" stroke="#3b3a39" stroke-width="1.4" stroke-linejoin="round"/><path d="M1 2.5L5 2.5L8 1.5L11 4.5L12 7.5L10.5 12.5H1Z" fill="#8cbdea" stroke="#1a6fc4" stroke-width="1.3"/><path d="M11 13L23 11.5V13L21 19L16.5 21.5L11 23L10 16Z" fill="#8cbdea" stroke="#1a6fc4" stroke-width="1.3"/></svg>
<svg class="r" style="left:1545.2px;top:332.6px;" width="23" height="23" viewBox="0 0 24 24" fill="none"><path d="M1 2.5L5 2.5L8 1.5L11 4.5L12 7.5L17 3L23 2.5V13L21 19L16.5 21.5L11 23L6 19L1 16.5Z" fill="#fafafa" stroke="#3b3a39" stroke-width="1.4" stroke-linejoin="round"/><path d="M1 2.5L5 2.5L8 1.5L11 4.5L12 7.5L10.5 12.5H1" stroke="#1a6fc4" stroke-width="1.2"/><path d="M1 12.5H23M11 13L10 23" stroke="#1a6fc4" stroke-width="1.2"/></svg>
<svg class="r" style="left:1577.6px;top:332.6px;" width="23" height="23" viewBox="0 0 24 24" fill="none"><path d="M13.5 0.5L1.5 21L13 16.5Z" fill="#3a9ad9"/><path d="M13.5 0.5L13 16.5L19.5 24Z" fill="#0f6cbd"/></svg>
<svg class="r" style="left:1610.0px;top:332.6px;" width="23" height="23" viewBox="0 0 24 24" fill="none"><path d="M1.5 20A10.5 10.5 0 0 1 22.5 20H17.5A5.5 5.5 0 0 0 6.5 20Z" fill="#fafafa" stroke="#3b3a39" stroke-width="1.5" stroke-linejoin="round"/><path d="M9.5 9.8A10.5 10.5 0 0 1 22.5 20H17.5A5.5 5.5 0 0 0 11 14.8Z" fill="#8cbdea" stroke="#1a6fc4" stroke-width="1.4"/><path d="M11 19.5L18 12.5" stroke="#3b3a39" stroke-width="2"/></svg>
<svg class="r" style="left:1448.1px;top:365.1px;" width="23" height="23" viewBox="0 0 24 24" fill="none"><rect x="0.8" y="2.2" width="22.4" height="17.5" fill="#fafafa" stroke="#3b3a39" stroke-width="1.6"/><text x="12" y="14" text-anchor="middle" font-family="Liberation Sans" font-size="10" fill="#2b88d8">123</text><path d="M3 17.2H21" stroke="#8a8886" stroke-width="1"/></svg>
<svg class="r" style="left:1480.5px;top:365.1px;" width="23" height="23" viewBox="0 0 24 24" fill="none"><rect x="1" y="1" width="22" height="22" fill="#fafafa" stroke="#3b3a39" stroke-width="1.6"/><path d="M4.5 4.5V19" stroke="#8a8886" stroke-width="1.2"/><path d="M7 6H19M7 13.5H19" stroke="#1a6fc4" stroke-width="2.2"/><path d="M7 9.5H13M7 17H13" stroke="#8a8886" stroke-width="1.2"/></svg>
<svg class="r" style="left:1512.9px;top:365.1px;" width="23" height="23" viewBox="0 0 24 24" fill="none"><rect x="0.8" y="1.5" width="22.4" height="19" fill="#fafafa" stroke="#3b3a39" stroke-width="1.6"/><path d="M4 12L7 6.5L10 12Z" fill="#30b050" stroke="#107c10" stroke-width="1"/><path d="M12.5 5.5H19L15.8 11Z" fill="#e8505b" stroke="#c50f1f" stroke-width="1"/><path d="M3 15.5H21" stroke="#8a8886" stroke-width="1.4"/></svg>
<svg class="r" style="left:1545.2px;top:365.1px;" width="23" height="23" viewBox="0 0 24 24" fill="none"><rect x="1" y="1" width="22" height="21" fill="#fafafa" stroke="#3b3a39" stroke-width="1.5"/><rect x="1" y="1" width="22" height="3" fill="#8a8886"/><rect x="4" y="8" width="3.5" height="3.5" fill="#c4c3c2" stroke="#8a8886"/><rect x="4" y="14" width="3.5" height="3.5" fill="#c4c3c2" stroke="#8a8886"/><path d="M11 12.5h12l-4.5 5v6h-3v-6z" fill="#fafafa" stroke="#3b3a39" stroke-width="1.5" stroke-linejoin="round"/></svg>
<svg class="r" style="left:1577.6px;top:365.1px;" width="23" height="23" viewBox="0 0 24 24" fill="none"><rect x="1" y="1" width="22" height="21.5" fill="#fafafa" stroke="#3b3a39" stroke-width="1.5"/><rect x="1" y="1" width="22" height="3" fill="#8a8886"/><path d="M1 9H23M1 14H23M1 18.5H23M8.5 4V22.5M15.5 4V22.5" stroke="#8a8886" stroke-width="1.3"/></svg>
<svg class="r" style="left:1610.0px;top:365.1px;" width="23" height="23" viewBox="0 0 24 24" fill="none"><rect x="1" y="1" width="22" height="21.5" fill="#fafafa" stroke="#3b3a39" stroke-width="1.5"/><rect x="15.5" y="4" width="7.5" height="18.5" fill="#5fa3e8"/><rect x="1" y="14" width="22" height="8.5" fill="#5fa3e8"/><rect x="1" y="1" width="22" height="3" fill="#8a8886"/><path d="M1 9H23M1 14H23M1 18.5H23M8.5 4V22.5M15.5 4V22.5" stroke="#8a8886" stroke-width="1.3"/></svg>
<svg class="r" style="left:1448.1px;top:397.6px;" width="23" height="23" viewBox="0 0 24 24" fill="none"><text x="11" y="19.5" text-anchor="middle" font-family="Liberation Sans" font-weight="700" font-size="17" fill="#1a7fd1">R</text></svg>
<svg class="r" style="left:1480.5px;top:397.6px;" width="23" height="23" viewBox="0 0 24 24" fill="none"><text x="12" y="17" text-anchor="middle" font-family="Liberation Sans" font-weight="700" font-size="16" fill="#1a7fd1" letter-spacing="-0.5">Py</text></svg>
<svg class="r" style="left:1512.9px;top:397.6px;" width="23" height="23" viewBox="0 0 24 24" fill="none"><path d="M1 0.5V22.5H23.5" stroke="#3b3a39" stroke-width="2"/><path d="M1.5 4.5H16" stroke="#1a6fc4" stroke-width="1.4"/><circle cx="18.5" cy="4.5" r="2.8" fill="#8cbdea" stroke="#1a6fc4" stroke-width="1.3"/><path d="M1.5 10H12M1.5 15.5H7.5" stroke="#3b3a39" stroke-width="1.3"/><rect x="12" y="8.5" width="3" height="3" fill="#fafafa" stroke="#3b3a39"/><rect x="7.5" y="14" width="3" height="3" fill="#fafafa" stroke="#3b3a39"/></svg>
<svg class="r" style="left:1545.2px;top:397.6px;" width="23" height="23" viewBox="0 0 24 24" fill="none"><rect x="1" y="8.5" width="7" height="5" fill="#8cbdea" stroke="#1a6fc4" stroke-width="1.3"/><path d="M8 11H12M12 3V19M12 3H15M12 11H15M12 19H15" stroke="#3b3a39" stroke-width="1.4"/><rect x="15" y="0.8" width="8" height="5" fill="#8cbdea" stroke="#1a6fc4" stroke-width="1.3"/><rect x="15" y="8.5" width="8" height="5" fill="#8cbdea" stroke="#1a6fc4" stroke-width="1.3"/><rect x="15" y="16.5" width="8" height="5" fill="#8cbdea" stroke="#1a6fc4" stroke-width="1.3"/></svg>
<svg class="r" style="left:1577.6px;top:397.6px;" width="23" height="23" viewBox="0 0 24 24" fill="none"><path d="M1 1.8H23V16.5H10L6 21.5V16.5H1Z" fill="#fafafa" stroke="#1a6fc4" stroke-width="1.6" stroke-linejoin="round"/></svg>
<svg class="r" style="left:1610.0px;top:397.6px;" width="23" height="23" viewBox="0 0 24 24" fill="none"><path d="M4 1H15.5L21 6.5V23H4Z" fill="#fafafa" stroke="#3b3a39" stroke-width="1.5" stroke-linejoin="round"/><path d="M15.5 1V6.5H21" stroke="#3b3a39" stroke-width="1.3"/><circle cx="4" cy="10" r="2.5" fill="#8cbdea" stroke="#1a6fc4" stroke-width="1.2"/><path d="M7.5 10H18M8 14H15" stroke="#2b88d8" stroke-width="1.3"/></svg>
<svg class="r" style="left:1448.1px;top:430.2px;" width="23" height="23" viewBox="0 0 24 24" fill="none"><path d="M5.5 1.5H18.5V9.5A6.5 6.5 0 0 1 5.5 9.5Z" fill="#fafafa" stroke="#3b3a39" stroke-width="1.6"/><path d="M5.5 4H1.5C1.5 8 3 10.5 6 11M18.5 4H22.5C22.5 8 21 10.5 18 11" stroke="#3b3a39" stroke-width="1.6"/><path d="M12 16V19L8.5 21M12 19L15.5 21" stroke="#3b3a39" stroke-width="1.5"/><rect x="5.5" y="1" width="13" height="3" fill="#5fa3e8"/><rect x="7" y="20.5" width="10" height="2.5" rx="1" fill="#2b88d8"/></svg>
<svg class="r" style="left:1480.5px;top:430.2px;" width="23" height="23" viewBox="0 0 24 24" fill="none"><path d="M3 1H15L21 7V23H3Z" fill="#fafafa" stroke="#3b3a39" stroke-width="1.5" stroke-linejoin="round"/><path d="M15 1V7H21" stroke="#3b3a39" stroke-width="1.3"/><rect x="6" y="14" width="2.5" height="6" fill="#3b3a39"/><rect x="10.5" y="16" width="2.5" height="4" fill="#3b3a39"/><rect x="15" y="11" width="2.5" height="9" fill="#3b3a39"/></svg>
<svg class="r" style="left:1512.9px;top:430.2px;" width="23" height="23" viewBox="0 0 24 24" fill="none"><rect x="2" y="5" width="21" height="16.5" fill="#fafafa" stroke="#3b3a39" stroke-width="1.5"/><text x="13.5" y="16.5" text-anchor="middle" font-family="Liberation Sans" font-size="9.5" fill="#2b88d8">123</text><path d="M4 19.5H21" stroke="#8a8886" stroke-width="1"/><path d="M8 0.5L1.5 9H5L2.5 14.5L10 6H6.5L9.5 0.5z" fill="#fbbf4a" stroke="#d9620b" stroke-width="1"/></svg>
<svg class="r" style="left:1545.2px;top:430.2px;" width="23" height="23" viewBox="0 0 24 24" fill="none"><rect x="2" y="13" width="8" height="9" fill="#fafafa" stroke="#8a8886" stroke-width="1.5"/><rect x="11" y="2" width="8" height="9" fill="#fafafa" stroke="#8a8886" stroke-width="1.5"/><path d="M8 6H11" stroke="#1a6fc4" stroke-width="1.5"/><path d="M11 12.5h12l-4.5 5v6h-3v-6z" fill="#fafafa" stroke="#3b3a39" stroke-width="1.5" stroke-linejoin="round"/><path d="M8 0.5L1.5 9H5L2.5 14.5L10 6H6.5L9.5 0.5z" fill="#fbbf4a" stroke="#d9620b" stroke-width="1"/></svg>
<svg class="r" style="left:1577.6px;top:430.2px;" width="23" height="23" viewBox="0 0 24 24" fill="none"><path d="M5 4H23V12M11 22H2V15" stroke="#3b3a39" stroke-width="1.3"/><path d="M6 20L10.5 8L14 16" stroke="#2b88d8" stroke-width="1.3"/><path d="M11 12.5h12l-4.5 5v6h-3v-6z" fill="#fafafa" stroke="#3b3a39" stroke-width="1.5" stroke-linejoin="round"/><path d="M8 0.5L1.5 9H5L2.5 14.5L10 6H6.5L9.5 0.5z" fill="#fbbf4a" stroke="#d9620b" stroke-width="1"/></svg>
<svg class="r" style="left:1610.0px;top:430.2px;" width="23" height="23" viewBox="0 0 24 24" fill="none"><path d="M5 4H23V12M11 22H2V15" stroke="#3b3a39" stroke-width="1.3"/><path d="M11 8H20" stroke="#8a8886" stroke-width="1.3"/><rect x="6" y="14.5" width="3" height="3" fill="#fafafa" stroke="#8a8886"/><path d="M9.5 16H11" stroke="#8a8886" stroke-width="1.2"/><path d="M11 12.5h12l-4.5 5v6h-3v-6z" fill="#fafafa" stroke="#3b3a39" stroke-width="1.5" stroke-linejoin="round"/><path d="M8 0.5L1.5 9H5L2.5 14.5L10 6H6.5L9.5 0.5z" fill="#fbbf4a" stroke="#d9620b" stroke-width="1"/></svg>
<svg class="r" style="left:1448.1px;top:462.8px;" width="23" height="23" viewBox="0 0 24 24" fill="none"><path d="M3 3H23V21L16 23H3V13" stroke="#1a6fc4" stroke-width="1.7"/><path d="M9 13L13 9L16 6L22 6V12L19 17H13L9 19Z" fill="#8cbdea"/><path d="M3.5 0.5A3.5 3.5 0 0 1 7 4C7 6.5 3.5 10 3.5 10S0 6.5 0 4A3.5 3.5 0 0 1 3.5 0.5Z" fill="#d9620b"/><circle cx="3.5" cy="4" r="1" fill="#fff"/><circle cx="20.5" cy="15.5" r="2" fill="#d9620b"/><circle cx="17" cy="21" r="2.7" fill="#d9620b"/></svg>
<svg class="r" style="left:1480.5px;top:462.8px;" width="23" height="23" viewBox="0 0 24 24" fill="none"><path d="M12 1.5L22.5 12L12 22.5L1.5 12Z" stroke="#9c3ec0" stroke-width="1.6" stroke-linejoin="round"/><path d="M8 5.5L18.5 16M16 5.5L5.5 16" stroke="#9c3ec0" stroke-width="1.6"/></svg>
<svg class="r" style="left:1512.9px;top:462.8px;" width="23" height="23" viewBox="0 0 24 24" fill="none"><path d="M1 3.5H12L21.5 13L14 21.5H5L12.5 13Z" stroke="#1a7fd1" stroke-width="1.6" stroke-linejoin="round"/><path d="M5 21.5L14.5 11" stroke="#1a7fd1" stroke-width="1.6"/></svg>
<svg class="r" style="left:1545.2px;top:462.8px;" width="23" height="23" viewBox="0 0 24 24" fill="none"><circle cx="5" cy="12" r="1.3" fill="#3b3a39"/><circle cx="12" cy="12" r="1.3" fill="#3b3a39"/><circle cx="19" cy="12" r="1.3" fill="#3b3a39"/></svg>
<div class="r" style="left:1542px;top:232px;width:30px;height:30px;border:1.5px solid #252423;box-sizing:border-box;"></div>
<div class="t" style="left:1438.3px;top:508.3px;font-size:13.9px;line-height:13.9px;color:#252423;">X-axis</div>
<div class="r" style="left:1438px;top:529px;width:205px;height:91px;background:#fff;border:1.5px dashed #605e5c;border-radius:3px;box-sizing:border-box;"></div>
<div class="r" style="left:1444px;top:535px;width:193px;height:36px;background:#fafafa;border:1.5px solid #605e5c;border-radius:4px;box-sizing:border-box;"></div>
<div class="t" style="left:1452.5px;top:547.0px;font-size:14.8px;line-height:14.8px;color:#252423;">Country</div>
<svg class="r" style="left:1574px;top:545px;" width="17" height="17" viewBox="0 0 17 17" fill="none"><path d="M1.5 1.5l14 14M15.5 1.5l-14 14" stroke="#252423" stroke-width="1.5"/></svg>
<div class="r" style="left:1600px;top:544px;width:1px;height:20px;background:#605e5c;"></div>
<svg class="r" style="left:1615px;top:545px;" width="10" height="17" viewBox="0 0 10 17" fill="none"><path d="M1.5 1.5l7 7-7 7" stroke="#252423" stroke-width="1.4"/></svg>
<div class="r" style="left:1444px;top:577px;width:193px;height:36px;background:#fff;border:1.5px solid #605e5c;border-radius:4px;box-sizing:border-box;"></div>
<div class="t" style="left:1540.5px;top:588.1px;font-size:14.6px;line-height:14.6px;color:#252423;font-weight:700;transform:translateX(-50%);">+Add data</div>
<div class="t" style="left:1438.3px;top:634.0px;font-size:13.9px;line-height:13.9px;color:#252423;">Y-axis</div>
<div class="r" style="left:1438px;top:655.5px;width:205px;height:132px;background:#fff;border:1.5px dashed #605e5c;border-radius:3px;box-sizing:border-box;"></div>
<div class="r" style="left:1444px;top:661px;width:193px;height:36px;background:#fafafa;border:1.5px solid #605e5c;border-radius:4px;box-sizing:border-box;"></div>
<svg class="r" style="left:1438px;top:662px" width="135" height="28" viewBox="0 0 135 28"><path d="M2 5.3L36.2 4.9L36.2 2L128.2 1.8L128.2 21.3L64.7 23.1C56 24 50 24.9 46.9 24.9L2 24.9Z" fill="#fbe600"/></svg>
<div class="t" style="left:1452.5px;top:673.0px;font-size:14.8px;line-height:14.8px;color:#252423;letter-spacing:-0.437px;">Sum of GDP (B...</div>
<svg class="r" style="left:1574px;top:671px;" width="17" height="17" viewBox="0 0 17 17" fill="none"><path d="M1.5 1.5l14 14M15.5 1.5l-14 14" stroke="#252423" stroke-width="1.5"/></svg>
<div class="r" style="left:1600px;top:670px;width:1px;height:20px;background:#605e5c;"></div>
<svg class="r" style="left:1615px;top:671px;" width="10" height="17" viewBox="0 0 10 17" fill="none"><path d="M1.5 1.5l7 7-7 7" stroke="#252423" stroke-width="1.4"/></svg>
<div class="r" style="left:1444px;top:703px;width:193px;height:36px;background:#fafafa;border:1.5px solid #605e5c;border-radius:4px;box-sizing:border-box;"></div>
<svg class="r" style="left:1438px;top:703px" width="140" height="40" viewBox="0 0 140 40"><path d="M4.2 2.1L9.6 2.1C10.5 2.8 11.3 3.4 12.2 3.9C16 5.6 20 7 24.7 8.3C34 11.5 43 14.5 51.3 16.3C57 17 62 17.2 69.1 17.2L134.9 17.2L134.9 35.9L51.3 35.9C45 35 40 33.5 33.6 31.4C24 28.5 14 25.5 4.2 22.6Z" fill="#fbe600"/></svg>
<div class="t" style="left:1452.5px;top:715.0px;font-size:14.8px;line-height:14.8px;color:#252423;letter-spacing:-0.195px;">Sum of Popula...</div>
<svg class="r" style="left:1574px;top:713px;" width="17" height="17" viewBox="0 0 17 17" fill="none"><path d="M1.5 1.5l14 14M15.5 1.5l-14 14" stroke="#252423" stroke-width="1.5"/></svg>
<div class="r" style="left:1600px;top:712px;width:1px;height:20px;background:#605e5c;"></div>
<svg class="r" style="left:1615px;top:713px;" width="10" height="17" viewBox="0 0 10 17" fill="none"><path d="M1.5 1.5l7 7-7 7" stroke="#252423" stroke-width="1.4"/></svg>
<div class="r" style="left:1444px;top:745px;width:193px;height:36px;background:#fff;border:1.5px solid #605e5c;border-radius:4px;box-sizing:border-box;"></div>
<div class="t" style="left:1540.5px;top:756.1px;font-size:14.6px;line-height:14.6px;color:#252423;font-weight:700;transform:translateX(-50%);">+Add data</div>
<div class="t" style="left:1438.3px;top:801.7px;font-size:13.9px;line-height:13.9px;color:#252423;">Legend</div>
<div class="r" style="left:1438px;top:823px;width:205px;height:47px;background:#fff;border:1.5px dashed #605e5c;border-radius:3px;box-sizing:border-box;"></div>
<div class="r" style="left:1444px;top:829px;width:193px;height:36px;background:#fff;border:1.5px solid #605e5c;border-radius:4px;box-sizing:border-box;"></div>
<div class="t" style="left:1540.5px;top:840.1px;font-size:14.6px;line-height:14.6px;color:#252423;font-weight:700;transform:translateX(-50%);">+Add data</div>
<div class="t" style="left:1438.3px;top:885.7px;font-size:13.9px;line-height:13.9px;color:#252423;">Small multiples</div>
<div class="r" style="left:1438px;top:907px;width:205px;height:28px;overflow:hidden;"><div style="position:absolute;left:0;top:0;width:205px;height:60px;background:#fff;border:1.5px dashed #605e5c;border-radius:3px;box-sizing:border-box;"></div><div style="position:absolute;left:6px;top:6px;width:193px;height:36px;background:#fff;border:1.5px solid #605e5c;border-radius:4px;box-sizing:border-box;"></div><div class="t" style="left:102.5px;top:16.6px;font-size:14.6px;line-height:14.6px;font-weight:700;color:#252423;transform:translateX(-50%);">+Add data</div></div>
<div class="t" style="left:1664.5px;top:170.5px;font-size:19.4px;line-height:19.4px;color:#252423;font-weight:700;">Data</div>
<div class="r" style="left:1825px;top:177px;width:2.6px;height:2.6px;background:#252423;border-radius:50%;"></div>
<div class="r" style="left:1832.5px;top:177px;width:2.6px;height:2.6px;background:#252423;border-radius:50%;"></div>
<div class="r" style="left:1840px;top:177px;width:2.6px;height:2.6px;background:#252423;border-radius:50%;"></div>
<svg class="r" style="left:1853px;top:171px;" width="17" height="16" viewBox="0 0 17 16" fill="none"><path d="M1.5 1l6.5 7-6.5 7M8.5 1l6.5 7-6.5 7" stroke="#252423" stroke-width="1.3"/></svg>
<div class="r" style="left:1660px;top:213px;width:214px;height:29px;background:#fff;border:1px solid #c8c6c4;border-bottom:1.5px solid #605e5c;border-radius:4px;box-sizing:border-box;"></div>
<svg class="r" style="left:1674px;top:219px;" width="18" height="18" viewBox="0 0 18 18" fill="none"><circle cx="7.5" cy="7.5" r="6" stroke="#605e5c" stroke-width="1.5"/><path d="M12 12l5 5" stroke="#605e5c" stroke-width="1.5"/></svg>
<div class="t" style="left:1701.5px;top:221.0px;font-size:15.9px;line-height:15.9px;color:#605e5c;">Search</div>
<div class="r" style="left:1864px;top:252px;width:10px;height:105px;background:#8a8886;border-radius:2px;"></div>
<svg class="r" style="left:1672px;top:260px;" width="11" height="16" viewBox="0 0 11 16" fill="none"><path d="M2 1.5l6.5 6.5-6.5 6.5" stroke="#3b3a39" stroke-width="1.3"/></svg>
<svg class="r" style="left:1690px;top:260px;" width="17" height="18" viewBox="0 0 17 18" fill="none"><rect x="1" y="1" width="14.5" height="14.5" rx="2.5" stroke="#3b3a39" stroke-width="1.7"/><path d="M1 5.7h14.5M1 10.7h14.5M5.7 1v14.5M10.7 1v14.5" stroke="#3b3a39" stroke-width="1.3"/></svg>
<div class="t" style="left:1713.3px;top:261.5px;font-size:14.4px;line-height:14.4px;color:#252423;">Ashishdata</div>
<svg class="r" style="left:1672px;top:290px;" width="11" height="16" viewBox="0 0 11 16" fill="none"><path d="M2 1.5l6.5 6.5-6.5 6.5" stroke="#3b3a39" stroke-width="1.3"/></svg>
<svg class="r" style="left:1690px;top:290px;" width="17" height="18" viewBox="0 0 17 18" fill="none"><rect x="1" y="1" width="14.5" height="14.5" rx="2.5" stroke="#3b3a39" stroke-width="1.7"/><path d="M1 5.7h14.5M1 10.7h14.5M5.7 1v14.5M10.7 1v14.5" stroke="#3b3a39" stroke-width="1.3"/></svg>
<div class="t" style="left:1713.3px;top:291.5px;font-size:14.4px;line-height:14.4px;color:#252423;">Branch details</div>
<svg class="r" style="left:1672px;top:320px;" width="11" height="16" viewBox="0 0 11 16" fill="none"><path d="M2 1.5l6.5 6.5-6.5 6.5" stroke="#3b3a39" stroke-width="1.3"/></svg>
<svg class="r" style="left:1690px;top:320px;" width="17" height="18" viewBox="0 0 17 18" fill="none"><path d="M13.5 5.5V3.5A2.5 2.5 0 0 0 11 1H3.5A2.5 2.5 0 0 0 1 3.5V13A2.5 2.5 0 0 0 3.5 15.5H8" stroke="#3b3a39" stroke-width="1.7"/><path d="M1 5.7h12.5M1 10.7h7M5.7 1v14.5M10.7 1v4.7" stroke="#3b3a39" stroke-width="1.3"/><rect x="8.8" y="7.2" width="8" height="10.6" rx="1.2" fill="#3b3a39"/><rect x="10.2" y="8.6" width="5.2" height="2" fill="#f3f2f1"/><path d="M10.2 12.8h1.6M13.8 12.8h1.6M10.2 15.6h1.6M13.8 15.6h1.6" stroke="#f3f2f1" stroke-width="1.5"/></svg>
<div class="t" style="left:1713.3px;top:321.5px;font-size:14.4px;line-height:14.4px;color:#252423;">Calculated Table</div>
<svg class="r" style="left:1672px;top:350px;" width="11" height="16" viewBox="0 0 11 16" fill="none"><path d="M2 1.5l6.5 6.5-6.5 6.5" stroke="#3b3a39" stroke-width="1.3"/></svg>
<svg class="r" style="left:1690px;top:350px;" width="17" height="18" viewBox="0 0 17 18" fill="none"><path d="M13.5 5.5V3.5A2.5 2.5 0 0 0 11 1H3.5A2.5 2.5 0 0 0 1 3.5V13A2.5 2.5 0 0 0 3.5 15.5H8" stroke="#3b3a39" stroke-width="1.7"/><path d="M1 5.7h12.5M1 10.7h7M5.7 1v14.5M10.7 1v4.7" stroke="#3b3a39" stroke-width="1.3"/><rect x="8.8" y="7.2" width="8" height="10.6" rx="1.2" fill="#3b3a39"/><rect x="10.2" y="8.6" width="5.2" height="2" fill="#f3f2f1"/><path d="M10.2 12.8h1.6M13.8 12.8h1.6M10.2 15.6h1.6M13.8 15.6h1.6" stroke="#f3f2f1" stroke-width="1.5"/></svg>
<div class="t" style="left:1713.3px;top:351.5px;font-size:14.4px;line-height:14.4px;color:#252423;">Class</div>
<div class="r" style="left:1660px;top:373px;width:203px;height:30px;background:#e1dfdd;border-radius:4px;"></div>
<div class="r" style="left:1660px;top:373px;width:5px;height:30px;background:#117865;border-radius:3px 0 0 3px;"></div>
<svg class="r" style="left:1670px;top:383px;" width="16" height="10" viewBox="0 0 16 10" fill="none"><path d="M1 1.5l7 7 7-7" stroke="#3b3a39" stroke-width="1.3"/></svg>
<svg class="r" style="left:1690px;top:380px;" width="17" height="18" viewBox="0 0 17 18" fill="none"><rect x="1" y="1" width="14.5" height="14.5" rx="2.5" stroke="#3b3a39" stroke-width="1.7"/><path d="M1 5.7h14.5M1 10.7h14.5M5.7 1v14.5M10.7 1v14.5" stroke="#3b3a39" stroke-width="1.3"/></svg>
<div class="r" style="left:1698px;top:388px;width:15px;height:15px;background:#117865;border-radius:50%;border:1px solid #e1dfdd;box-sizing:border-box;"></div>
<svg class="r" style="left:1701px;top:391px;" width="9" height="9" viewBox="0 0 9 9" fill="none"><path d="M1.5 4.5l2 2 4-4" stroke="#fff" stroke-width="1.5"/></svg>
<div class="t" style="left:1713.3px;top:381.5px;font-size:14.4px;line-height:14.4px;color:#252423;">Countries</div>
<div class="r" style="left:1709px;top:411px;width:15px;height:15px;background:#fff;border:1px solid #605e5c;border-radius:2px;box-sizing:border-box;"></div>
<svg class="r" style="left:1734px;top:410px;" width="15" height="16" viewBox="0 0 15 16" fill="none"><path d="M13 3.5V1.5H1.5l6 6.5-6 6.5H13v-2" stroke="#3b3a39" stroke-width="1.2" stroke-linejoin="miter"/></svg>
<div class="t" style="left:1757.0px;top:411.8px;font-size:14.4px;line-height:14.4px;color:#252423;">Area (sq km)</div>
<div class="r" style="left:1709px;top:441px;width:15px;height:15px;background:#117865;border-radius:2px;"></div>
<svg class="r" style="left:1710px;top:442px;" width="13" height="13" viewBox="0 0 13 13" fill="none"><path d="M2.5 6.5l3 3 5-6" stroke="#fff" stroke-width="1.5"/></svg>
<div class="t" style="left:1757.0px;top:441.8px;font-size:14.4px;line-height:14.4px;color:#252423;">Country</div>
<div class="r" style="left:1709px;top:471px;width:15px;height:15px;background:#117865;border-radius:2px;"></div>
<svg class="r" style="left:1710px;top:472px;" width="13" height="13" viewBox="0 0 13 13" fill="none"><path d="M2.5 6.5l3 3 5-6" stroke="#fff" stroke-width="1.5"/></svg>
<svg class="r" style="left:1734px;top:470px;" width="15" height="16" viewBox="0 0 15 16" fill="none"><path d="M13 3.5V1.5H1.5l6 6.5-6 6.5H13v-2" stroke="#3b3a39" stroke-width="1.2" stroke-linejoin="miter"/></svg>
<div class="t" style="left:1757.0px;top:471.8px;font-size:14.4px;line-height:14.4px;color:#252423;">GDP (Billion U...</div>
<div class="r" style="left:1709px;top:501px;width:15px;height:15px;background:#fff;border:1px solid #605e5c;border-radius:2px;box-sizing:border-box;"></div>
<svg class="r" style="left:1734px;top:500px;" width="15" height="16" viewBox="0 0 15 16" fill="none"><path d="M13 3.5V1.5H1.5l6 6.5-6 6.5H13v-2" stroke="#3b3a39" stroke-width="1.2" stroke-linejoin="miter"/></svg>
<div class="t" style="left:1757.0px;top:501.8px;font-size:14.4px;line-height:14.4px;color:#252423;">Literacy Rate (...</div>
<div class="r" style="left:1709px;top:531px;width:15px;height:15px;background:#117865;border-radius:2px;"></div>
<svg class="r" style="left:1710px;top:532px;" width="13" height="13" viewBox="0 0 13 13" fill="none"><path d="M2.5 6.5l3 3 5-6" stroke="#fff" stroke-width="1.5"/></svg>
<svg class="r" style="left:1734px;top:530px;" width="15" height="16" viewBox="0 0 15 16" fill="none"><path d="M13 3.5V1.5H1.5l6 6.5-6 6.5H13v-2" stroke="#3b3a39" stroke-width="1.2" stroke-linejoin="miter"/></svg>
<div class="t" style="left:1757.0px;top:531.8px;font-size:14.4px;line-height:14.4px;color:#252423;">Population...</div>
<div class="r" style="left:1709px;top:561px;width:15px;height:15px;background:#fff;border:1px solid #605e5c;border-radius:2px;box-sizing:border-box;"></div>
<svg class="r" style="left:1734px;top:560px;" width="15" height="16" viewBox="0 0 15 16" fill="none"><path d="M13 3.5V1.5H1.5l6 6.5-6 6.5H13v-2" stroke="#3b3a39" stroke-width="1.2" stroke-linejoin="miter"/></svg>
<div class="t" style="left:1757.0px;top:561.8px;font-size:14.4px;line-height:14.4px;color:#252423;">Year</div>
<div class="r" style="left:1846px;top:536px;width:2.2px;height:2.2px;background:#3b3a39;border-radius:50%;"></div>
<div class="r" style="left:1851.5px;top:536px;width:2.2px;height:2.2px;background:#3b3a39;border-radius:50%;"></div>
<div class="r" style="left:1857px;top:536px;width:2.2px;height:2.2px;background:#3b3a39;border-radius:50%;"></div>
<svg class="r" style="left:1672px;top:590px;" width="11" height="16" viewBox="0 0 11 16" fill="none"><path d="M2 1.5l6.5 6.5-6.5 6.5" stroke="#3b3a39" stroke-width="1.3"/></svg>
<svg class="r" style="left:1690px;top:590px;" width="17" height="18" viewBox="0 0 17 18" fill="none"><path d="M13.5 5.5V3.5A2.5 2.5 0 0 0 11 1H3.5A2.5 2.5 0 0 0 1 3.5V13A2.5 2.5 0 0 0 3.5 15.5H8" stroke="#3b3a39" stroke-width="1.7"/><path d="M1 5.7h12.5M1 10.7h7M5.7 1v14.5M10.7 1v4.7" stroke="#3b3a39" stroke-width="1.3"/><rect x="8.8" y="7.2" width="8" height="10.6" rx="1.2" fill="#3b3a39"/><rect x="10.2" y="8.6" width="5.2" height="2" fill="#f3f2f1"/><path d="M10.2 12.8h1.6M13.8 12.8h1.6M10.2 15.6h1.6M13.8 15.6h1.6" stroke="#f3f2f1" stroke-width="1.5"/></svg>
<div class="t" style="left:1713.3px;top:591.5px;font-size:14.4px;line-height:14.4px;color:#252423;letter-spacing:0.05px;">Countries Average T...</div>
<svg class="r" style="left:1672px;top:620px;" width="11" height="16" viewBox="0 0 11 16" fill="none"><path d="M2 1.5l6.5 6.5-6.5 6.5" stroke="#3b3a39" stroke-width="1.3"/></svg>
<svg class="r" style="left:1690px;top:620px;" width="17" height="18" viewBox="0 0 17 18" fill="none"><rect x="1" y="1" width="14.5" height="14.5" rx="2.5" stroke="#3b3a39" stroke-width="1.7"/><path d="M1 5.7h14.5M1 10.7h14.5M5.7 1v14.5M10.7 1v14.5" stroke="#3b3a39" stroke-width="1.3"/></svg>
<div class="t" style="left:1713.3px;top:621.5px;font-size:14.4px;line-height:14.4px;color:#252423;letter-spacing:0.328px;">Countrylist</div>
<svg class="r" style="left:1672px;top:650px;" width="11" height="16" viewBox="0 0 11 16" fill="none"><path d="M2 1.5l6.5 6.5-6.5 6.5" stroke="#3b3a39" stroke-width="1.3"/></svg>
<svg class="r" style="left:1690px;top:650px;" width="17" height="18" viewBox="0 0 17 18" fill="none"><rect x="1" y="1" width="14.5" height="14.5" rx="2.5" stroke="#3b3a39" stroke-width="1.7"/><path d="M1 5.7h14.5M1 10.7h14.5M5.7 1v14.5M10.7 1v14.5" stroke="#3b3a39" stroke-width="1.3"/></svg>
<div class="t" style="left:1713.3px;top:651.5px;font-size:14.4px;line-height:14.4px;color:#252423;letter-spacing:0.01px;">Customers</div>
<svg class="r" style="left:1672px;top:680px;" width="11" height="16" viewBox="0 0 11 16" fill="none"><path d="M2 1.5l6.5 6.5-6.5 6.5" stroke="#3b3a39" stroke-width="1.3"/></svg>
<svg class="r" style="left:1690px;top:680px;" width="17" height="18" viewBox="0 0 17 18" fill="none"><rect x="1" y="1" width="14.5" height="14.5" rx="2.5" stroke="#3b3a39" stroke-width="1.7"/><path d="M1 5.7h14.5M1 10.7h14.5M5.7 1v14.5M10.7 1v14.5" stroke="#3b3a39" stroke-width="1.3"/></svg>
<div class="t" style="left:1713.3px;top:681.5px;font-size:14.4px;line-height:14.4px;color:#252423;letter-spacing:0.014px;">CustomersData</div>
<svg class="r" style="left:1672px;top:710px;" width="11" height="16" viewBox="0 0 11 16" fill="none"><path d="M2 1.5l6.5 6.5-6.5 6.5" stroke="#3b3a39" stroke-width="1.3"/></svg>
<svg class="r" style="left:1690px;top:710px;" width="17" height="18" viewBox="0 0 17 18" fill="none"><rect x="1" y="1" width="14.5" height="14.5" rx="2.5" stroke="#3b3a39" stroke-width="1.7"/><path d="M1 5.7h14.5M1 10.7h14.5M5.7 1v14.5M10.7 1v14.5" stroke="#3b3a39" stroke-width="1.3"/></svg>
<div class="t" style="left:1713.3px;top:711.5px;font-size:14.4px;line-height:14.4px;color:#252423;letter-spacing:-0.607px;">Data1</div>
<svg class="r" style="left:1672px;top:740px;" width="11" height="16" viewBox="0 0 11 16" fill="none"><path d="M2 1.5l6.5 6.5-6.5 6.5" stroke="#3b3a39" stroke-width="1.3"/></svg>
<svg class="r" style="left:1690px;top:740px;" width="17" height="18" viewBox="0 0 17 18" fill="none"><rect x="1" y="1" width="14.5" height="14.5" rx="2.5" stroke="#3b3a39" stroke-width="1.7"/><path d="M1 5.7h14.5M1 10.7h14.5M5.7 1v14.5M10.7 1v14.5" stroke="#3b3a39" stroke-width="1.3"/></svg>
<div class="t" style="left:1713.3px;top:741.5px;font-size:14.4px;line-height:14.4px;color:#252423;letter-spacing:-0.607px;">Data2</div>
<svg class="r" style="left:1672px;top:770px;" width="11" height="16" viewBox="0 0 11 16" fill="none"><path d="M2 1.5l6.5 6.5-6.5 6.5" stroke="#3b3a39" stroke-width="1.3"/></svg>
<svg class="r" style="left:1690px;top:770px;" width="17" height="18" viewBox="0 0 17 18" fill="none"><path d="M13.5 5.5V3.5A2.5 2.5 0 0 0 11 1H3.5A2.5 2.5 0 0 0 1 3.5V13A2.5 2.5 0 0 0 3.5 15.5H8" stroke="#3b3a39" stroke-width="1.7"/><path d="M1 5.7h12.5M1 10.7h7M5.7 1v14.5M10.7 1v4.7" stroke="#3b3a39" stroke-width="1.3"/><rect x="8.8" y="7.2" width="8" height="10.6" rx="1.2" fill="#3b3a39"/><rect x="10.2" y="8.6" width="5.2" height="2" fill="#f3f2f1"/><path d="M10.2 12.8h1.6M13.8 12.8h1.6M10.2 15.6h1.6M13.8 15.6h1.6" stroke="#f3f2f1" stroke-width="1.5"/></svg>
<div class="t" style="left:1713.3px;top:771.5px;font-size:14.4px;line-height:14.4px;color:#252423;letter-spacing:-0.689px;">DATESBETWEEN Table</div>
<svg class="r" style="left:1672px;top:800px;" width="11" height="16" viewBox="0 0 11 16" fill="none"><path d="M2 1.5l6.5 6.5-6.5 6.5" stroke="#3b3a39" stroke-width="1.3"/></svg>
<svg class="r" style="left:1690px;top:800px;" width="17" height="18" viewBox="0 0 17 18" fill="none"><path d="M13.5 5.5V3.5A2.5 2.5 0 0 0 11 1H3.5A2.5 2.5 0 0 0 1 3.5V13A2.5 2.5 0 0 0 3.5 15.5H8" stroke="#3b3a39" stroke-width="1.7"/><path d="M1 5.7h12.5M1 10.7h7M5.7 1v14.5M10.7 1v4.7" stroke="#3b3a39" stroke-width="1.3"/><rect x="8.8" y="7.2" width="8" height="10.6" rx="1.2" fill="#3b3a39"/><rect x="10.2" y="8.6" width="5.2" height="2" fill="#f3f2f1"/><path d="M10.2 12.8h1.6M13.8 12.8h1.6M10.2 15.6h1.6M13.8 15.6h1.6" stroke="#f3f2f1" stroke-width="1.5"/></svg>
<div class="t" style="left:1713.3px;top:801.5px;font-size:14.4px;line-height:14.4px;color:#252423;letter-spacing:-0.473px;">DATESINPERIOD Table</div>
<svg class="r" style="left:1672px;top:830px;" width="11" height="16" viewBox="0 0 11 16" fill="none"><path d="M2 1.5l6.5 6.5-6.5 6.5" stroke="#3b3a39" stroke-width="1.3"/></svg>
<svg class="r" style="left:1690px;top:830px;" width="17" height="18" viewBox="0 0 17 18" fill="none"><path d="M13.5 5.5V3.5A2.5 2.5 0 0 0 11 1H3.5A2.5 2.5 0 0 0 1 3.5V13A2.5 2.5 0 0 0 3.5 15.5H8" stroke="#3b3a39" stroke-width="1.7"/><path d="M1 5.7h12.5M1 10.7h7M5.7 1v14.5M10.7 1v4.7" stroke="#3b3a39" stroke-width="1.3"/><rect x="8.8" y="7.2" width="8" height="10.6" rx="1.2" fill="#3b3a39"/><rect x="10.2" y="8.6" width="5.2" height="2" fill="#f3f2f1"/><path d="M10.2 12.8h1.6M13.8 12.8h1.6M10.2 15.6h1.6M13.8 15.6h1.6" stroke="#f3f2f1" stroke-width="1.5"/></svg>
<div class="t" style="left:1713.3px;top:831.5px;font-size:14.4px;line-height:14.4px;color:#252423;letter-spacing:-0.315px;">DATESMTD Table</div>
<svg class="r" style="left:1672px;top:860px;" width="11" height="16" viewBox="0 0 11 16" fill="none"><path d="M2 1.5l6.5 6.5-6.5 6.5" stroke="#3b3a39" stroke-width="1.3"/></svg>
<svg class="r" style="left:1690px;top:860px;" width="17" height="18" viewBox="0 0 17 18" fill="none"><rect x="1" y="1" width="14.5" height="14.5" rx="2.5" stroke="#3b3a39" stroke-width="1.7"/><path d="M1 5.7h14.5M1 10.7h14.5M5.7 1v14.5M10.7 1v14.5" stroke="#3b3a39" stroke-width="1.3"/></svg>
<div class="t" style="left:1713.3px;top:861.5px;font-size:14.4px;line-height:14.4px;color:#252423;letter-spacing:-0.009px;">df</div>
<svg class="r" style="left:1672px;top:890px;" width="11" height="16" viewBox="0 0 11 16" fill="none"><path d="M2 1.5l6.5 6.5-6.5 6.5" stroke="#3b3a39" stroke-width="1.3"/></svg>
<svg class="r" style="left:1690px;top:890px;" width="17" height="18" viewBox="0 0 17 18" fill="none"><path d="M13.5 5.5V3.5A2.5 2.5 0 0 0 11 1H3.5A2.5 2.5 0 0 0 1 3.5V13A2.5 2.5 0 0 0 3.5 15.5H8" stroke="#3b3a39" stroke-width="1.7"/><path d="M1 5.7h12.5M1 10.7h7M5.7 1v14.5M10.7 1v4.7" stroke="#3b3a39" stroke-width="1.3"/><rect x="8.8" y="7.2" width="8" height="10.6" rx="1.2" fill="#3b3a39"/><rect x="10.2" y="8.6" width="5.2" height="2" fill="#f3f2f1"/><path d="M10.2 12.8h1.6M13.8 12.8h1.6M10.2 15.6h1.6M13.8 15.6h1.6" stroke="#f3f2f1" stroke-width="1.5"/></svg>
<div class="t" style="left:1713.3px;top:891.5px;font-size:14.4px;line-height:14.4px;color:#252423;letter-spacing:-0.253px;">DISTINCT Values Table</div>
<svg class="r" style="left:1672px;top:920px;" width="11" height="16" viewBox="0 0 11 16" fill="none"><path d="M2 1.5l6.5 6.5-6.5 6.5" stroke="#3b3a39" stroke-width="1.3"/></svg>
<svg class="r" style="left:1690px;top:920px;" width="17" height="18" viewBox="0 0 17 18" fill="none"><path d="M13.5 5.5V3.5A2.5 2.5 0 0 0 11 1H3.5A2.5 2.5 0 0 0 1 3.5V13A2.5 2.5 0 0 0 3.5 15.5H8" stroke="#3b3a39" stroke-width="1.7"/><path d="M1 5.7h12.5M1 10.7h7M5.7 1v14.5M10.7 1v4.7" stroke="#3b3a39" stroke-width="1.3"/><rect x="8.8" y="7.2" width="8" height="10.6" rx="1.2" fill="#3b3a39"/><rect x="10.2" y="8.6" width="5.2" height="2" fill="#f3f2f1"/><path d="M10.2 12.8h1.6M13.8 12.8h1.6M10.2 15.6h1.6M13.8 15.6h1.6" stroke="#f3f2f1" stroke-width="1.5"/></svg>
<div class="t" style="left:1713.3px;top:921.5px;font-size:14.4px;line-height:14.4px;color:#252423;letter-spacing:0.086px;">Filtered Table</div>
<div class="r" style="left:1881px;top:155px;width:37px;height:40px;background:#e1dfdd;border:1px solid #605e5c;border-right:none;box-sizing:border-box;"></div>
<div class="r" style="left:1881px;top:196px;width:37px;height:39px;background:#e1dfdd;border:1px solid #605e5c;border-right:none;box-sizing:border-box;"></div>
<svg class="r" style="left:1890px;top:163px;" width="21" height="25" viewBox="0 0 21 25" fill="none"><ellipse cx="10.5" cy="4.5" rx="9" ry="3.5" stroke="#3b3a39" stroke-width="1.4"/><path d="M1.5 4.5v15c0 2 4 3.5 9 3.5s9-1.5 9-3.5v-15" stroke="#3b3a39" stroke-width="1.4"/></svg>
<svg class="r" style="left:1889px;top:203px;" width="24" height="23" viewBox="0 0 24 23" fill="none"><path d="M1.5 21V11h4V21M5.5 21V2h6v8" stroke="#3b3a39" stroke-width="1.4"/><path d="M11 6h4v3" stroke="#3b3a39" stroke-width="1.3"/><path d="M1 21.5h10" stroke="#3b3a39" stroke-width="1.4"/><ellipse cx="17" cy="12" rx="5" ry="2" stroke="#ca5010" stroke-width="1.4"/><path d="M12 12v8c0 1 2 2 5 2s5-1 5-2v-8" stroke="#ca5010" stroke-width="1.4"/></svg>
<svg class="r" style="left:1886px;top:243px;" width="29" height="26" viewBox="0 0 29 26" fill="none"><path d="M4 19.5V10H9V19.5M9 10V1.5H16V9.5M16 5.5H22V8.5" stroke="#3b3a39" stroke-width="1.5"/><path d="M25.5 8.2C26.7 7.2 27.8 8.2 27 9.5L19.5 18.5L17.5 17Z" fill="#fff" stroke="#3b3a39" stroke-width="1.3" stroke-linejoin="round"/><path d="M17.5 17C15 16.5 12.5 18 11.5 20.5C11 22 9.5 23 8.5 23.5C11 24.5 15 24.3 17.5 22.5C19 21.3 19.7 19.8 19.5 18.5Z" fill="#2b88d8" stroke="#0f5aa8" stroke-width="1" stroke-linejoin="round"/></svg>
<svg class="r" style="left:1891px;top:285px;" width="18" height="23" viewBox="0 0 18 23" fill="none"><path d="M1.5 1.5h15v20l-7.5-6-7.5 6z" stroke="#3b3a39" stroke-width="1.4" stroke-linejoin="round"/></svg>
<svg class="r" style="left:1886px;top:320px;" width="29" height="30" viewBox="0 0 29 30" fill="none"><path d="M16.5 3.5H24.5V20" stroke="#3b3a39" stroke-width="1.5"/><path d="M18 8.5H22.5M18 12.5H22.5" stroke="#3b3a39" stroke-width="1.2"/><path d="M3.5 17.5V26.5H19M7 17.5V23H19" stroke="#3b3a39" stroke-width="1.4"/><path d="M3.2 10A6.3 6.3 0 0 1 14.2 6" stroke="#2c9a3f" stroke-width="1.9"/><path d="M14.8 2.2V6.8H10.2" stroke="#2c9a3f" stroke-width="1.7"/><path d="M15.3 12A6.3 6.3 0 0 1 4.3 16" stroke="#2c9a3f" stroke-width="1.9"/><path d="M3.7 19.8V15.2H8.3" stroke="#2c9a3f" stroke-width="1.7"/><path d="M16.5 18.5H28L23.8 23.5V29.2H20.7V23.5Z" fill="#f9f9f9" stroke="#3b3a39" stroke-width="1.5" stroke-linejoin="round"/></svg>
<svg class="r" style="left:1886px;top:362px;" width="29" height="24" viewBox="0 0 29 24" fill="none"><rect x="10.5" y="2" width="15.5" height="13.5" fill="#fcd98a" stroke="#d9620b" stroke-width="1.5"/><rect x="2.5" y="8.5" width="15" height="12" fill="#f9f9f9" stroke="#3b3a39" stroke-width="1.5"/><path d="M12.5 9L23.5 17.5L19 18.5L21.8 23L19.8 24L17.2 19.5L13.5 22.5Z" fill="#f9f9f9" stroke="#3b3a39" stroke-width="1.3" stroke-linejoin="round"/></svg>
<svg class="r" style="left:1889px;top:405px;" width="22" height="22" viewBox="0 0 22 22" fill="none"><path d="M11 1v20M1 11h20" stroke="#252423" stroke-width="1.8"/></svg>
<div class="r" style="left:1881px;top:905px;width:37px;height:1px;background:#e1dfdd;"></div>
<svg class="r" style="left:1887px;top:912px;" width="26" height="26" viewBox="0 0 26 26" fill="none"><path d="M21.80 13.00 L24.28 15.24 L23.62 17.40 L20.32 17.89 L19.22 19.22 L19.39 22.56 L17.40 23.62 L14.72 21.63 L13.00 21.80 L10.76 24.28 L8.60 23.62 L8.11 20.32 L6.78 19.22 L3.44 19.39 L2.38 17.40 L4.37 14.72 L4.20 13.00 L1.72 10.76 L2.38 8.60 L5.68 8.11 L6.78 6.78 L6.61 3.44 L8.60 2.38 L11.28 4.37 L13.00 4.20 L15.24 1.72 L17.40 2.38 L17.89 5.68 L19.22 6.78 L22.56 6.61 L23.62 8.60 L21.63 11.28Z" stroke="#3b3a39" stroke-width="1.5" stroke-linejoin="round"/><circle cx="13" cy="13" r="3.8" stroke="#3b3a39" stroke-width="1.5"/></svg>
</body></html>
